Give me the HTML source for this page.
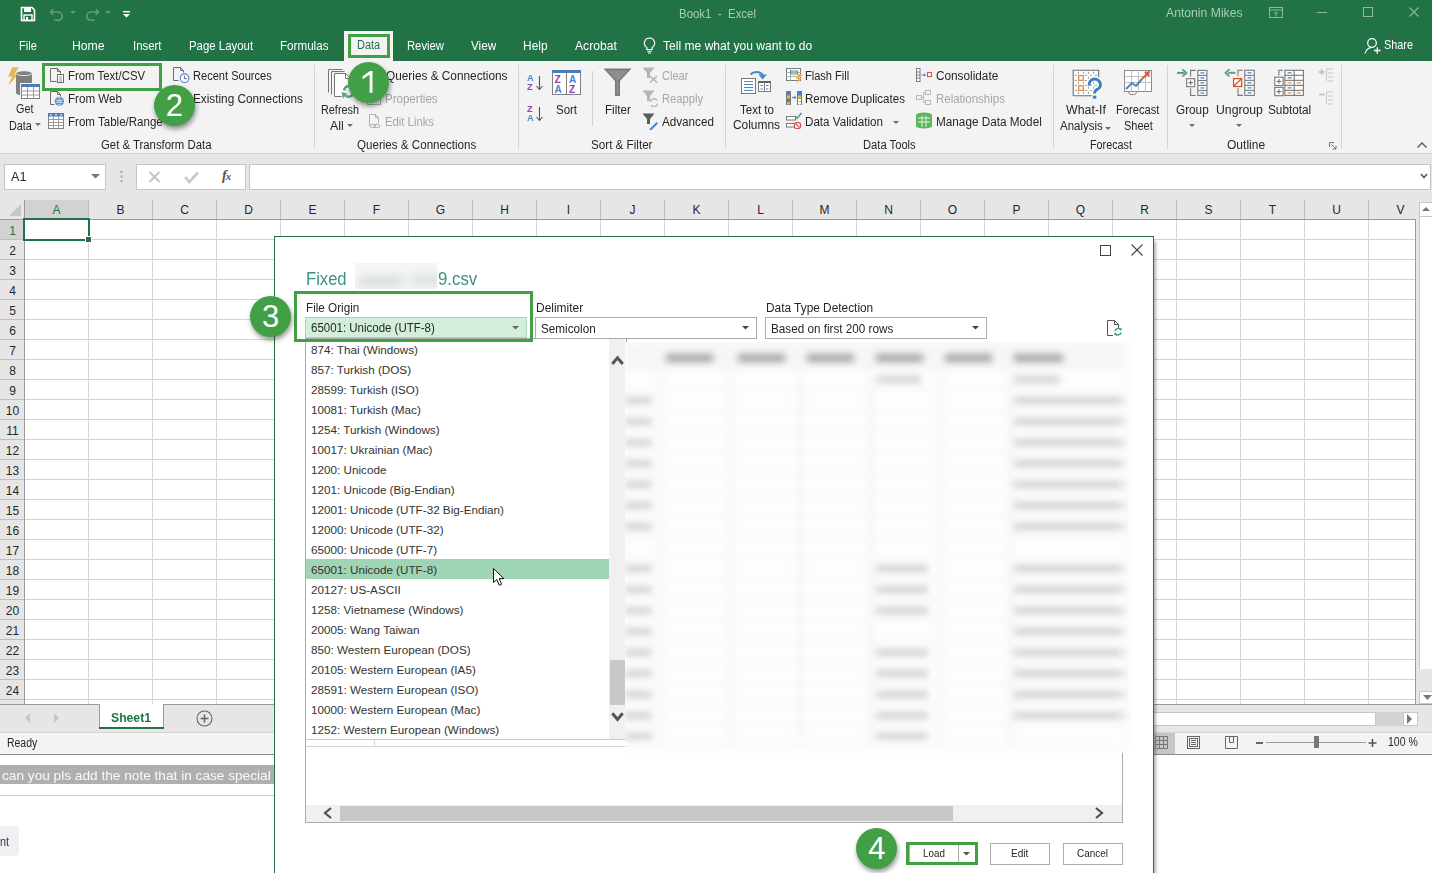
<!DOCTYPE html>
<html><head><meta charset="utf-8"><style>
html,body{margin:0;padding:0;}
body{width:1432px;height:873px;overflow:hidden;position:relative;font-family:"Liberation Sans", sans-serif;background:#fff;}
div,svg{box-sizing:border-box;}
</style></head><body>
<div style="position:absolute;left:0px;top:0px;width:1432px;height:61px;background:#217346;"></div>
<div style="position:absolute;left:344px;top:31px;width:49px;height:31px;background:#f3f3f3;"></div>
<div style="position:absolute;left:0px;top:61px;width:1432px;height:92px;background:#f3f3f3;"></div>
<div style="position:absolute;left:0px;top:153px;width:1432px;height:1px;background:#d2d2d2;"></div>
<div style="position:absolute;left:0px;top:154px;width:1432px;height:46px;background:#e6e6e6;"></div>
<div style="position:absolute;left:679.00px;top:8.24px;font-size:12px;line-height:12px;color:#a7cbb6;font-weight:normal;white-space:pre;transform:scaleX(0.9541);transform-origin:0 0;">Book1  -  Excel</div>
<div style="position:absolute;left:1166.00px;top:6.54px;font-size:12px;line-height:12px;color:#a7cbb6;font-weight:normal;white-space:pre;transform:scaleX(1.0163);transform-origin:0 0;">Antonin Mikes</div>
<div style="position:absolute;left:19.40px;top:40.14px;font-size:12px;line-height:12px;color:#ffffff;font-weight:normal;white-space:pre;transform:scaleX(0.9202);transform-origin:0 0;">File</div>
<div style="position:absolute;left:72.40px;top:40.14px;font-size:12px;line-height:12px;color:#ffffff;font-weight:normal;white-space:pre;transform:scaleX(1.0183);transform-origin:0 0;">Home</div>
<div style="position:absolute;left:132.50px;top:40.14px;font-size:12px;line-height:12px;color:#ffffff;font-weight:normal;white-space:pre;transform:scaleX(0.9462);transform-origin:0 0;">Insert</div>
<div style="position:absolute;left:188.50px;top:40.14px;font-size:12px;line-height:12px;color:#ffffff;font-weight:normal;white-space:pre;transform:scaleX(0.9512);transform-origin:0 0;">Page Layout</div>
<div style="position:absolute;left:280.30px;top:40.14px;font-size:12px;line-height:12px;color:#ffffff;font-weight:normal;white-space:pre;transform:scaleX(0.9697);transform-origin:0 0;">Formulas</div>
<div style="position:absolute;left:406.90px;top:40.14px;font-size:12px;line-height:12px;color:#ffffff;font-weight:normal;white-space:pre;transform:scaleX(0.9375);transform-origin:0 0;">Review</div>
<div style="position:absolute;left:470.80px;top:40.14px;font-size:12px;line-height:12px;color:#ffffff;font-weight:normal;white-space:pre;transform:scaleX(0.9769);transform-origin:0 0;">View</div>
<div style="position:absolute;left:523.00px;top:40.14px;font-size:12px;line-height:12px;color:#ffffff;font-weight:normal;white-space:pre;transform:scaleX(0.9965);transform-origin:0 0;">Help</div>
<div style="position:absolute;left:575.00px;top:40.14px;font-size:12px;line-height:12px;color:#ffffff;font-weight:normal;white-space:pre;transform:scaleX(1.0107);transform-origin:0 0;">Acrobat</div>
<div style="position:absolute;left:662.50px;top:40.14px;font-size:12px;line-height:12px;color:#ffffff;font-weight:normal;white-space:pre;transform:scaleX(1.0069);transform-origin:0 0;">Tell me what you want to do</div>
<div style="position:absolute;left:356.50px;top:39.44px;font-size:12px;line-height:12px;color:#217346;font-weight:normal;white-space:pre;transform:scaleX(0.9148);transform-origin:0 0;">Data</div>
<div style="position:absolute;left:1384.00px;top:39.44px;font-size:12px;line-height:12px;color:#ffffff;font-weight:normal;white-space:pre;transform:scaleX(0.9054);transform-origin:0 0;">Share</div>
<div style="position:absolute;left:15.60px;top:103.44px;font-size:12px;line-height:12px;color:#262626;font-weight:normal;white-space:pre;transform:scaleX(0.8995);transform-origin:0 0;">Get</div>
<div style="position:absolute;left:8.70px;top:119.64px;font-size:12px;line-height:12px;color:#262626;font-weight:normal;white-space:pre;transform:scaleX(0.9030);transform-origin:0 0;">Data</div>
<div style="position:absolute;left:67.60px;top:69.94px;font-size:12px;line-height:12px;color:#262626;font-weight:normal;white-space:pre;transform:scaleX(0.9502);transform-origin:0 0;">From Text/CSV</div>
<div style="position:absolute;left:67.60px;top:92.84px;font-size:12px;line-height:12px;color:#262626;font-weight:normal;white-space:pre;transform:scaleX(0.9678);transform-origin:0 0;">From Web</div>
<div style="position:absolute;left:67.60px;top:115.74px;font-size:12px;line-height:12px;color:#262626;font-weight:normal;white-space:pre;transform:scaleX(0.9624);transform-origin:0 0;">From Table/Range</div>
<div style="position:absolute;left:101.00px;top:139.44px;font-size:12px;line-height:12px;color:#262626;font-weight:normal;white-space:pre;transform:scaleX(0.9467);transform-origin:0 0;">Get &amp; Transform Data</div>
<div style="position:absolute;left:192.60px;top:69.84px;font-size:12px;line-height:12px;color:#262626;font-weight:normal;white-space:pre;transform:scaleX(0.9228);transform-origin:0 0;">Recent Sources</div>
<div style="position:absolute;left:192.60px;top:92.84px;font-size:12px;line-height:12px;color:#262626;font-weight:normal;white-space:pre;transform:scaleX(0.9807);transform-origin:0 0;">Existing Connections</div>
<div style="position:absolute;left:321.30px;top:103.54px;font-size:12px;line-height:12px;color:#262626;font-weight:normal;white-space:pre;transform:scaleX(0.9041);transform-origin:0 0;">Refresh</div>
<div style="position:absolute;left:330.00px;top:119.64px;font-size:12px;line-height:12px;color:#262626;font-weight:normal;white-space:pre;transform:scaleX(1.0342);transform-origin:0 0;">All</div>
<div style="position:absolute;left:386.40px;top:69.84px;font-size:12px;line-height:12px;color:#262626;font-weight:normal;white-space:pre;transform:scaleX(0.9846);transform-origin:0 0;">Queries &amp; Connections</div>
<div style="position:absolute;left:385.00px;top:92.94px;font-size:12px;line-height:12px;color:#a6a6a6;font-weight:normal;white-space:pre;transform:scaleX(0.9616);transform-origin:0 0;">Properties</div>
<div style="position:absolute;left:385.00px;top:115.74px;font-size:12px;line-height:12px;color:#a6a6a6;font-weight:normal;white-space:pre;transform:scaleX(0.9417);transform-origin:0 0;">Edit Links</div>
<div style="position:absolute;left:356.70px;top:139.14px;font-size:12px;line-height:12px;color:#262626;font-weight:normal;white-space:pre;transform:scaleX(0.9667);transform-origin:0 0;">Queries &amp; Connections</div>
<div style="position:absolute;left:556.00px;top:103.54px;font-size:12px;line-height:12px;color:#262626;font-weight:normal;white-space:pre;transform:scaleX(0.9539);transform-origin:0 0;">Sort</div>
<div style="position:absolute;left:605.30px;top:103.54px;font-size:12px;line-height:12px;color:#262626;font-weight:normal;white-space:pre;transform:scaleX(0.9711);transform-origin:0 0;">Filter</div>
<div style="position:absolute;left:661.70px;top:69.94px;font-size:12px;line-height:12px;color:#a6a6a6;font-weight:normal;white-space:pre;transform:scaleX(0.9168);transform-origin:0 0;">Clear</div>
<div style="position:absolute;left:661.70px;top:92.84px;font-size:12px;line-height:12px;color:#a6a6a6;font-weight:normal;white-space:pre;transform:scaleX(0.9334);transform-origin:0 0;">Reapply</div>
<div style="position:absolute;left:661.70px;top:115.54px;font-size:12px;line-height:12px;color:#262626;font-weight:normal;white-space:pre;transform:scaleX(0.9724);transform-origin:0 0;">Advanced</div>
<div style="position:absolute;left:591.40px;top:139.44px;font-size:12px;line-height:12px;color:#262626;font-weight:normal;white-space:pre;transform:scaleX(0.9707);transform-origin:0 0;">Sort &amp; Filter</div>
<div style="position:absolute;left:739.80px;top:103.54px;font-size:12px;line-height:12px;color:#262626;font-weight:normal;white-space:pre;transform:scaleX(0.9587);transform-origin:0 0;">Text to</div>
<div style="position:absolute;left:732.50px;top:119.24px;font-size:12px;line-height:12px;color:#262626;font-weight:normal;white-space:pre;transform:scaleX(0.9924);transform-origin:0 0;">Columns</div>
<div style="position:absolute;left:805.40px;top:69.64px;font-size:12px;line-height:12px;color:#262626;font-weight:normal;white-space:pre;transform:scaleX(0.9205);transform-origin:0 0;">Flash Fill</div>
<div style="position:absolute;left:805.40px;top:92.74px;font-size:12px;line-height:12px;color:#262626;font-weight:normal;white-space:pre;transform:scaleX(0.9601);transform-origin:0 0;">Remove Duplicates</div>
<div style="position:absolute;left:805.40px;top:115.64px;font-size:12px;line-height:12px;color:#262626;font-weight:normal;white-space:pre;transform:scaleX(0.9689);transform-origin:0 0;">Data Validation</div>
<div style="position:absolute;left:935.60px;top:69.64px;font-size:12px;line-height:12px;color:#262626;font-weight:normal;white-space:pre;transform:scaleX(0.9815);transform-origin:0 0;">Consolidate</div>
<div style="position:absolute;left:935.60px;top:92.74px;font-size:12px;line-height:12px;color:#a6a6a6;font-weight:normal;white-space:pre;transform:scaleX(0.9563);transform-origin:0 0;">Relationships</div>
<div style="position:absolute;left:935.60px;top:115.64px;font-size:12px;line-height:12px;color:#262626;font-weight:normal;white-space:pre;transform:scaleX(0.9789);transform-origin:0 0;">Manage Data Model</div>
<div style="position:absolute;left:862.70px;top:139.44px;font-size:12px;line-height:12px;color:#262626;font-weight:normal;white-space:pre;transform:scaleX(0.9330);transform-origin:0 0;">Data Tools</div>
<div style="position:absolute;left:1066.00px;top:103.94px;font-size:12px;line-height:12px;color:#262626;font-weight:normal;white-space:pre;transform:scaleX(1.0343);transform-origin:0 0;">What-If</div>
<div style="position:absolute;left:1060.00px;top:119.74px;font-size:12px;line-height:12px;color:#262626;font-weight:normal;white-space:pre;transform:scaleX(0.9578);transform-origin:0 0;">Analysis</div>
<div style="position:absolute;left:1116.00px;top:103.94px;font-size:12px;line-height:12px;color:#262626;font-weight:normal;white-space:pre;transform:scaleX(0.9296);transform-origin:0 0;">Forecast</div>
<div style="position:absolute;left:1124.00px;top:119.74px;font-size:12px;line-height:12px;color:#262626;font-weight:normal;white-space:pre;transform:scaleX(0.9152);transform-origin:0 0;">Sheet</div>
<div style="position:absolute;left:1089.50px;top:139.44px;font-size:12px;line-height:12px;color:#262626;font-weight:normal;white-space:pre;transform:scaleX(0.8975);transform-origin:0 0;">Forecast</div>
<div style="position:absolute;left:1176.00px;top:103.94px;font-size:12px;line-height:12px;color:#262626;font-weight:normal;white-space:pre;transform:scaleX(0.9802);transform-origin:0 0;">Group</div>
<div style="position:absolute;left:1216.00px;top:103.94px;font-size:12px;line-height:12px;color:#262626;font-weight:normal;white-space:pre;transform:scaleX(1.0189);transform-origin:0 0;">Ungroup</div>
<div style="position:absolute;left:1268.20px;top:103.94px;font-size:12px;line-height:12px;color:#262626;font-weight:normal;white-space:pre;transform:scaleX(0.9808);transform-origin:0 0;">Subtotal</div>
<div style="position:absolute;left:1227.40px;top:139.44px;font-size:12px;line-height:12px;color:#262626;font-weight:normal;white-space:pre;transform:scaleX(1.0018);transform-origin:0 0;">Outline</div>
<div style="position:absolute;left:314px;top:65px;width:1px;height:84px;background:#d4d4d4;"></div>
<div style="position:absolute;left:518px;top:65px;width:1px;height:84px;background:#d4d4d4;"></div>
<div style="position:absolute;left:725px;top:65px;width:1px;height:84px;background:#d4d4d4;"></div>
<div style="position:absolute;left:1053px;top:65px;width:1px;height:84px;background:#d4d4d4;"></div>
<div style="position:absolute;left:1167px;top:65px;width:1px;height:84px;background:#d4d4d4;"></div>
<div style="position:absolute;left:1341px;top:65px;width:1px;height:84px;background:#d4d4d4;"></div>
<div style="position:absolute;left:592px;top:71px;width:1px;height:55px;background:#d4d4d4;"></div>
<div style="position:absolute;left:4px;top:164px;width:102px;height:26px;background:#ffffff;border:1px solid #c6c6c6;"></div>
<div style="position:absolute;left:11.20px;top:171.44px;font-size:12px;line-height:12px;color:#262626;font-weight:normal;white-space:pre;transform:scaleX(1.0553);transform-origin:0 0;">A1</div>
<div style="position:absolute;left:136px;top:164px;width:110px;height:26px;background:#ffffff;border:1px solid #c6c6c6;"></div>
<div style="position:absolute;left:249px;top:164px;width:1182px;height:26px;background:#ffffff;border:1px solid #c6c6c6;"></div>
<div style="position:absolute;left:0px;top:200px;width:1416px;height:20px;background:#e6e6e6;"></div>
<div style="position:absolute;left:24px;top:200px;width:65px;height:19px;background:#d2d2d2;"></div>
<div style="position:absolute;left:0px;top:219px;width:1416px;height:1px;background:#9b9b9b;"></div>
<div style="position:absolute;left:0px;top:220px;width:24px;height:484px;background:#e6e6e6;"></div>
<div style="position:absolute;left:0px;top:220px;width:24px;height:19px;background:#d2d2d2;"></div>
<div style="position:absolute;left:24px;top:200px;width:1px;height:504px;background:#9b9b9b;"></div>
<div style="position:absolute;left:88px;top:200px;width:1px;height:19px;background:#bfbfbf;"></div>
<div style="position:absolute;left:88px;top:220px;width:1px;height:484px;background:#d4d4d4;"></div>
<div style="position:absolute;left:152px;top:200px;width:1px;height:19px;background:#bfbfbf;"></div>
<div style="position:absolute;left:152px;top:220px;width:1px;height:484px;background:#d4d4d4;"></div>
<div style="position:absolute;left:216px;top:200px;width:1px;height:19px;background:#bfbfbf;"></div>
<div style="position:absolute;left:216px;top:220px;width:1px;height:484px;background:#d4d4d4;"></div>
<div style="position:absolute;left:280px;top:200px;width:1px;height:19px;background:#bfbfbf;"></div>
<div style="position:absolute;left:280px;top:220px;width:1px;height:484px;background:#d4d4d4;"></div>
<div style="position:absolute;left:344px;top:200px;width:1px;height:19px;background:#bfbfbf;"></div>
<div style="position:absolute;left:344px;top:220px;width:1px;height:484px;background:#d4d4d4;"></div>
<div style="position:absolute;left:408px;top:200px;width:1px;height:19px;background:#bfbfbf;"></div>
<div style="position:absolute;left:408px;top:220px;width:1px;height:484px;background:#d4d4d4;"></div>
<div style="position:absolute;left:472px;top:200px;width:1px;height:19px;background:#bfbfbf;"></div>
<div style="position:absolute;left:472px;top:220px;width:1px;height:484px;background:#d4d4d4;"></div>
<div style="position:absolute;left:536px;top:200px;width:1px;height:19px;background:#bfbfbf;"></div>
<div style="position:absolute;left:536px;top:220px;width:1px;height:484px;background:#d4d4d4;"></div>
<div style="position:absolute;left:600px;top:200px;width:1px;height:19px;background:#bfbfbf;"></div>
<div style="position:absolute;left:600px;top:220px;width:1px;height:484px;background:#d4d4d4;"></div>
<div style="position:absolute;left:664px;top:200px;width:1px;height:19px;background:#bfbfbf;"></div>
<div style="position:absolute;left:664px;top:220px;width:1px;height:484px;background:#d4d4d4;"></div>
<div style="position:absolute;left:728px;top:200px;width:1px;height:19px;background:#bfbfbf;"></div>
<div style="position:absolute;left:728px;top:220px;width:1px;height:484px;background:#d4d4d4;"></div>
<div style="position:absolute;left:792px;top:200px;width:1px;height:19px;background:#bfbfbf;"></div>
<div style="position:absolute;left:792px;top:220px;width:1px;height:484px;background:#d4d4d4;"></div>
<div style="position:absolute;left:856px;top:200px;width:1px;height:19px;background:#bfbfbf;"></div>
<div style="position:absolute;left:856px;top:220px;width:1px;height:484px;background:#d4d4d4;"></div>
<div style="position:absolute;left:920px;top:200px;width:1px;height:19px;background:#bfbfbf;"></div>
<div style="position:absolute;left:920px;top:220px;width:1px;height:484px;background:#d4d4d4;"></div>
<div style="position:absolute;left:984px;top:200px;width:1px;height:19px;background:#bfbfbf;"></div>
<div style="position:absolute;left:984px;top:220px;width:1px;height:484px;background:#d4d4d4;"></div>
<div style="position:absolute;left:1048px;top:200px;width:1px;height:19px;background:#bfbfbf;"></div>
<div style="position:absolute;left:1048px;top:220px;width:1px;height:484px;background:#d4d4d4;"></div>
<div style="position:absolute;left:1112px;top:200px;width:1px;height:19px;background:#bfbfbf;"></div>
<div style="position:absolute;left:1112px;top:220px;width:1px;height:484px;background:#d4d4d4;"></div>
<div style="position:absolute;left:1176px;top:200px;width:1px;height:19px;background:#bfbfbf;"></div>
<div style="position:absolute;left:1176px;top:220px;width:1px;height:484px;background:#d4d4d4;"></div>
<div style="position:absolute;left:1240px;top:200px;width:1px;height:19px;background:#bfbfbf;"></div>
<div style="position:absolute;left:1240px;top:220px;width:1px;height:484px;background:#d4d4d4;"></div>
<div style="position:absolute;left:1304px;top:200px;width:1px;height:19px;background:#bfbfbf;"></div>
<div style="position:absolute;left:1304px;top:220px;width:1px;height:484px;background:#d4d4d4;"></div>
<div style="position:absolute;left:1368px;top:200px;width:1px;height:19px;background:#bfbfbf;"></div>
<div style="position:absolute;left:1368px;top:220px;width:1px;height:484px;background:#d4d4d4;"></div>
<div style="position:absolute;left:0px;top:239px;width:24px;height:1px;background:#bfbfbf;"></div>
<div style="position:absolute;left:25px;top:239px;width:1391px;height:1px;background:#d4d4d4;"></div>
<div style="position:absolute;left:0px;top:259px;width:24px;height:1px;background:#bfbfbf;"></div>
<div style="position:absolute;left:25px;top:259px;width:1391px;height:1px;background:#d4d4d4;"></div>
<div style="position:absolute;left:0px;top:279px;width:24px;height:1px;background:#bfbfbf;"></div>
<div style="position:absolute;left:25px;top:279px;width:1391px;height:1px;background:#d4d4d4;"></div>
<div style="position:absolute;left:0px;top:299px;width:24px;height:1px;background:#bfbfbf;"></div>
<div style="position:absolute;left:25px;top:299px;width:1391px;height:1px;background:#d4d4d4;"></div>
<div style="position:absolute;left:0px;top:319px;width:24px;height:1px;background:#bfbfbf;"></div>
<div style="position:absolute;left:25px;top:319px;width:1391px;height:1px;background:#d4d4d4;"></div>
<div style="position:absolute;left:0px;top:339px;width:24px;height:1px;background:#bfbfbf;"></div>
<div style="position:absolute;left:25px;top:339px;width:1391px;height:1px;background:#d4d4d4;"></div>
<div style="position:absolute;left:0px;top:359px;width:24px;height:1px;background:#bfbfbf;"></div>
<div style="position:absolute;left:25px;top:359px;width:1391px;height:1px;background:#d4d4d4;"></div>
<div style="position:absolute;left:0px;top:379px;width:24px;height:1px;background:#bfbfbf;"></div>
<div style="position:absolute;left:25px;top:379px;width:1391px;height:1px;background:#d4d4d4;"></div>
<div style="position:absolute;left:0px;top:399px;width:24px;height:1px;background:#bfbfbf;"></div>
<div style="position:absolute;left:25px;top:399px;width:1391px;height:1px;background:#d4d4d4;"></div>
<div style="position:absolute;left:0px;top:419px;width:24px;height:1px;background:#bfbfbf;"></div>
<div style="position:absolute;left:25px;top:419px;width:1391px;height:1px;background:#d4d4d4;"></div>
<div style="position:absolute;left:0px;top:439px;width:24px;height:1px;background:#bfbfbf;"></div>
<div style="position:absolute;left:25px;top:439px;width:1391px;height:1px;background:#d4d4d4;"></div>
<div style="position:absolute;left:0px;top:459px;width:24px;height:1px;background:#bfbfbf;"></div>
<div style="position:absolute;left:25px;top:459px;width:1391px;height:1px;background:#d4d4d4;"></div>
<div style="position:absolute;left:0px;top:479px;width:24px;height:1px;background:#bfbfbf;"></div>
<div style="position:absolute;left:25px;top:479px;width:1391px;height:1px;background:#d4d4d4;"></div>
<div style="position:absolute;left:0px;top:499px;width:24px;height:1px;background:#bfbfbf;"></div>
<div style="position:absolute;left:25px;top:499px;width:1391px;height:1px;background:#d4d4d4;"></div>
<div style="position:absolute;left:0px;top:519px;width:24px;height:1px;background:#bfbfbf;"></div>
<div style="position:absolute;left:25px;top:519px;width:1391px;height:1px;background:#d4d4d4;"></div>
<div style="position:absolute;left:0px;top:539px;width:24px;height:1px;background:#bfbfbf;"></div>
<div style="position:absolute;left:25px;top:539px;width:1391px;height:1px;background:#d4d4d4;"></div>
<div style="position:absolute;left:0px;top:559px;width:24px;height:1px;background:#bfbfbf;"></div>
<div style="position:absolute;left:25px;top:559px;width:1391px;height:1px;background:#d4d4d4;"></div>
<div style="position:absolute;left:0px;top:579px;width:24px;height:1px;background:#bfbfbf;"></div>
<div style="position:absolute;left:25px;top:579px;width:1391px;height:1px;background:#d4d4d4;"></div>
<div style="position:absolute;left:0px;top:599px;width:24px;height:1px;background:#bfbfbf;"></div>
<div style="position:absolute;left:25px;top:599px;width:1391px;height:1px;background:#d4d4d4;"></div>
<div style="position:absolute;left:0px;top:619px;width:24px;height:1px;background:#bfbfbf;"></div>
<div style="position:absolute;left:25px;top:619px;width:1391px;height:1px;background:#d4d4d4;"></div>
<div style="position:absolute;left:0px;top:639px;width:24px;height:1px;background:#bfbfbf;"></div>
<div style="position:absolute;left:25px;top:639px;width:1391px;height:1px;background:#d4d4d4;"></div>
<div style="position:absolute;left:0px;top:659px;width:24px;height:1px;background:#bfbfbf;"></div>
<div style="position:absolute;left:25px;top:659px;width:1391px;height:1px;background:#d4d4d4;"></div>
<div style="position:absolute;left:0px;top:679px;width:24px;height:1px;background:#bfbfbf;"></div>
<div style="position:absolute;left:25px;top:679px;width:1391px;height:1px;background:#d4d4d4;"></div>
<div style="position:absolute;left:0px;top:699px;width:24px;height:1px;background:#bfbfbf;"></div>
<div style="position:absolute;left:25px;top:699px;width:1391px;height:1px;background:#d4d4d4;"></div>
<div style="position:absolute;left:1415px;top:219px;width:1px;height:485px;background:#9b9b9b;"></div>
<div style="position:absolute;left:0px;top:704px;width:1416px;height:1px;background:#9b9b9b;"></div>
<div style="position:absolute;left:52.49px;top:204.34px;font-size:12px;line-height:12px;color:#217346;font-weight:normal;white-space:pre;">A</div>
<div style="position:absolute;left:116.49px;top:204.34px;font-size:12px;line-height:12px;color:#262626;font-weight:normal;white-space:pre;">B</div>
<div style="position:absolute;left:180.16px;top:204.34px;font-size:12px;line-height:12px;color:#262626;font-weight:normal;white-space:pre;">C</div>
<div style="position:absolute;left:244.16px;top:204.34px;font-size:12px;line-height:12px;color:#262626;font-weight:normal;white-space:pre;">D</div>
<div style="position:absolute;left:308.49px;top:204.34px;font-size:12px;line-height:12px;color:#262626;font-weight:normal;white-space:pre;">E</div>
<div style="position:absolute;left:372.83px;top:204.34px;font-size:12px;line-height:12px;color:#262626;font-weight:normal;white-space:pre;">F</div>
<div style="position:absolute;left:435.83px;top:204.34px;font-size:12px;line-height:12px;color:#262626;font-weight:normal;white-space:pre;">G</div>
<div style="position:absolute;left:500.16px;top:204.34px;font-size:12px;line-height:12px;color:#262626;font-weight:normal;white-space:pre;">H</div>
<div style="position:absolute;left:566.83px;top:204.34px;font-size:12px;line-height:12px;color:#262626;font-weight:normal;white-space:pre;">I</div>
<div style="position:absolute;left:629.50px;top:204.34px;font-size:12px;line-height:12px;color:#262626;font-weight:normal;white-space:pre;">J</div>
<div style="position:absolute;left:692.49px;top:204.34px;font-size:12px;line-height:12px;color:#262626;font-weight:normal;white-space:pre;">K</div>
<div style="position:absolute;left:757.16px;top:204.34px;font-size:12px;line-height:12px;color:#262626;font-weight:normal;white-space:pre;">L</div>
<div style="position:absolute;left:819.50px;top:204.34px;font-size:12px;line-height:12px;color:#262626;font-weight:normal;white-space:pre;">M</div>
<div style="position:absolute;left:884.16px;top:204.34px;font-size:12px;line-height:12px;color:#262626;font-weight:normal;white-space:pre;">N</div>
<div style="position:absolute;left:947.83px;top:204.34px;font-size:12px;line-height:12px;color:#262626;font-weight:normal;white-space:pre;">O</div>
<div style="position:absolute;left:1012.49px;top:204.34px;font-size:12px;line-height:12px;color:#262626;font-weight:normal;white-space:pre;">P</div>
<div style="position:absolute;left:1075.83px;top:204.34px;font-size:12px;line-height:12px;color:#262626;font-weight:normal;white-space:pre;">Q</div>
<div style="position:absolute;left:1140.16px;top:204.34px;font-size:12px;line-height:12px;color:#262626;font-weight:normal;white-space:pre;">R</div>
<div style="position:absolute;left:1204.49px;top:204.34px;font-size:12px;line-height:12px;color:#262626;font-weight:normal;white-space:pre;">S</div>
<div style="position:absolute;left:1268.83px;top:204.34px;font-size:12px;line-height:12px;color:#262626;font-weight:normal;white-space:pre;">T</div>
<div style="position:absolute;left:1332.16px;top:204.34px;font-size:12px;line-height:12px;color:#262626;font-weight:normal;white-space:pre;">U</div>
<div style="position:absolute;left:1396.49px;top:204.34px;font-size:12px;line-height:12px;color:#262626;font-weight:normal;white-space:pre;">V</div>
<div style="position:absolute;left:9.16px;top:225.14px;font-size:12px;line-height:12px;color:#217346;font-weight:normal;white-space:pre;">1</div>
<div style="position:absolute;left:9.16px;top:245.14px;font-size:12px;line-height:12px;color:#262626;font-weight:normal;white-space:pre;">2</div>
<div style="position:absolute;left:9.16px;top:265.14px;font-size:12px;line-height:12px;color:#262626;font-weight:normal;white-space:pre;">3</div>
<div style="position:absolute;left:9.16px;top:285.14px;font-size:12px;line-height:12px;color:#262626;font-weight:normal;white-space:pre;">4</div>
<div style="position:absolute;left:9.16px;top:305.14px;font-size:12px;line-height:12px;color:#262626;font-weight:normal;white-space:pre;">5</div>
<div style="position:absolute;left:9.16px;top:325.14px;font-size:12px;line-height:12px;color:#262626;font-weight:normal;white-space:pre;">6</div>
<div style="position:absolute;left:9.16px;top:345.14px;font-size:12px;line-height:12px;color:#262626;font-weight:normal;white-space:pre;">7</div>
<div style="position:absolute;left:9.16px;top:365.14px;font-size:12px;line-height:12px;color:#262626;font-weight:normal;white-space:pre;">8</div>
<div style="position:absolute;left:9.16px;top:385.14px;font-size:12px;line-height:12px;color:#262626;font-weight:normal;white-space:pre;">9</div>
<div style="position:absolute;left:5.82px;top:405.14px;font-size:12px;line-height:12px;color:#262626;font-weight:normal;white-space:pre;">10</div>
<div style="position:absolute;left:6.27px;top:425.14px;font-size:12px;line-height:12px;color:#262626;font-weight:normal;white-space:pre;">11</div>
<div style="position:absolute;left:5.82px;top:445.14px;font-size:12px;line-height:12px;color:#262626;font-weight:normal;white-space:pre;">12</div>
<div style="position:absolute;left:5.82px;top:465.14px;font-size:12px;line-height:12px;color:#262626;font-weight:normal;white-space:pre;">13</div>
<div style="position:absolute;left:5.82px;top:485.14px;font-size:12px;line-height:12px;color:#262626;font-weight:normal;white-space:pre;">14</div>
<div style="position:absolute;left:5.82px;top:505.14px;font-size:12px;line-height:12px;color:#262626;font-weight:normal;white-space:pre;">15</div>
<div style="position:absolute;left:5.82px;top:525.14px;font-size:12px;line-height:12px;color:#262626;font-weight:normal;white-space:pre;">16</div>
<div style="position:absolute;left:5.82px;top:545.14px;font-size:12px;line-height:12px;color:#262626;font-weight:normal;white-space:pre;">17</div>
<div style="position:absolute;left:5.82px;top:565.14px;font-size:12px;line-height:12px;color:#262626;font-weight:normal;white-space:pre;">18</div>
<div style="position:absolute;left:5.82px;top:585.14px;font-size:12px;line-height:12px;color:#262626;font-weight:normal;white-space:pre;">19</div>
<div style="position:absolute;left:5.82px;top:605.14px;font-size:12px;line-height:12px;color:#262626;font-weight:normal;white-space:pre;">20</div>
<div style="position:absolute;left:5.82px;top:625.14px;font-size:12px;line-height:12px;color:#262626;font-weight:normal;white-space:pre;">21</div>
<div style="position:absolute;left:5.82px;top:645.14px;font-size:12px;line-height:12px;color:#262626;font-weight:normal;white-space:pre;">22</div>
<div style="position:absolute;left:5.82px;top:665.14px;font-size:12px;line-height:12px;color:#262626;font-weight:normal;white-space:pre;">23</div>
<div style="position:absolute;left:5.82px;top:685.14px;font-size:12px;line-height:12px;color:#262626;font-weight:normal;white-space:pre;">24</div>
<svg style="position:absolute;left:9px;top:204px;" width="13" height="12" viewBox="0 0 13 12"><polygon points="12,0 12,12 0,12" fill="#c6c6c6"/></svg>
<div style="position:absolute;left:23px;top:218px;width:67px;height:23px;background:transparent;border:2px solid #217346;"></div>
<div style="position:absolute;left:86px;top:237px;width:5px;height:5px;background:#217346;outline:1px solid #fff;"></div>
<div style="position:absolute;left:1416px;top:200px;width:16px;height:504px;background:#e6e6e6;"></div>
<div style="position:absolute;left:1419px;top:202px;width:13px;height:15px;background:#ffffff;border:1px solid #c6c6c6;border-right:none;"></div>
<div style="position:absolute;left:1419px;top:217px;width:13px;height:452px;background:#ffffff;border-left:1px solid #c6c6c6;"></div>
<div style="position:absolute;left:1419px;top:691px;width:13px;height:13px;background:#ffffff;border:1px solid #c6c6c6;border-right:none;"></div>
<div style="position:absolute;left:0px;top:704px;width:1432px;height:28px;background:#e6e6e6;"></div>
<div style="position:absolute;left:0px;top:704px;width:1432px;height:1px;background:#9b9b9b;"></div>
<div style="position:absolute;left:99px;top:704px;width:65px;height:25px;background:#ffffff;border:1px solid #9b9b9b;border-top:none;"></div>
<div style="position:absolute;left:99px;top:727px;width:65px;height:2px;background:#217346;"></div>
<div style="position:absolute;left:111.00px;top:712.14px;font-size:12px;line-height:12px;color:#217346;font-weight:bold;white-space:pre;transform:scaleX(1.0163);transform-origin:0 0;">Sheet1</div>
<div style="position:absolute;left:1150px;top:712px;width:226px;height:14px;background:#ffffff;border:1px solid #c6c6c6;"></div>
<div style="position:absolute;left:1376px;top:712px;width:27px;height:14px;background:#d4d4d4;"></div>
<div style="position:absolute;left:1403px;top:712px;width:15px;height:14px;background:#ffffff;border:1px solid #c6c6c6;"></div>
<div style="position:absolute;left:0px;top:732px;width:1432px;height:22px;background:#f3f3f3;"></div>
<div style="position:absolute;left:0px;top:732px;width:1432px;height:1px;background:#d4d4d4;"></div>
<div style="position:absolute;left:0px;top:754px;width:1432px;height:1px;background:#8c8c8c;"></div>
<div style="position:absolute;left:6.50px;top:737.24px;font-size:12px;line-height:12px;color:#262626;font-weight:normal;white-space:pre;transform:scaleX(0.8706);transform-origin:0 0;">Ready</div>
<div style="position:absolute;left:1150px;top:733px;width:25px;height:21px;background:#c6c6c6;"></div>
<div style="position:absolute;left:1388.00px;top:735.84px;font-size:12px;line-height:12px;color:#262626;font-weight:normal;white-space:pre;transform:scaleX(0.8757);transform-origin:0 0;">100 %</div>
<div style="position:absolute;left:0px;top:755px;width:1432px;height:118px;background:#ffffff;"></div>
<div style="position:absolute;left:0px;top:765px;width:274px;height:19px;background:#afafaf;"></div>
<div style="position:absolute;left:2.30px;top:769.10px;font-size:13px;line-height:13px;color:#fafafa;font-weight:normal;white-space:pre;transform:scaleX(1.0503);transform-origin:0 0;">can you pls add the note that in case special</div>
<div style="position:absolute;left:0px;top:795px;width:274px;height:1px;background:#c8ced6;"></div>
<div style="position:absolute;left:-10px;top:826px;width:29px;height:30px;background:#eef0f3;border-radius:4px;"></div>
<div style="position:absolute;left:-0.50px;top:835.30px;font-size:13px;line-height:13px;color:#333;font-weight:normal;white-space:pre;transform:scaleX(0.8300);transform-origin:0 0;">nt</div>
<div style="position:absolute;left:274px;top:236px;width:880px;height:660px;background:#ffffff;border:1px solid #217346;box-shadow:3px 4px 3px -1px rgba(0,0,0,0.3);"></div>
<div style="position:absolute;left:306.00px;top:268.52px;font-size:19px;line-height:19px;color:#3f9084;font-weight:normal;white-space:pre;transform:scaleX(0.8737);transform-origin:0 0;">Fixed</div>
<div style="position:absolute;left:355px;top:263px;width:82px;height:26px;background:#f4f6f5;overflow:hidden;"><div style="position:absolute;left:4px;top:13px;width:44px;height:10px;background:#d9dfdb;filter:blur(4px);"></div><div style="position:absolute;left:56px;top:12px;width:30px;height:10px;background:#dbe1dd;filter:blur(4px);"></div></div>
<div style="position:absolute;left:437.50px;top:268.52px;font-size:19px;line-height:19px;color:#3f9084;font-weight:normal;white-space:pre;transform:scaleX(0.8837);transform-origin:0 0;">9.csv</div>
<div style="position:absolute;left:1100px;top:245px;width:11px;height:11px;background:transparent;border:1px solid #444;"></div>
<svg style="position:absolute;left:1131px;top:244px;" width="12" height="12" viewBox="0 0 12 12"><path d="M0.5 0.5 L11.5 11.5 M11.5 0.5 L0.5 11.5" stroke="#444" stroke-width="1.1"/></svg>
<div style="position:absolute;left:305.50px;top:301.74px;font-size:12px;line-height:12px;color:#262626;font-weight:normal;white-space:pre;transform:scaleX(0.9746);transform-origin:0 0;">File Origin</div>
<div style="position:absolute;left:535.60px;top:301.74px;font-size:12px;line-height:12px;color:#262626;font-weight:normal;white-space:pre;transform:scaleX(0.9970);transform-origin:0 0;">Delimiter</div>
<div style="position:absolute;left:765.50px;top:302.14px;font-size:12px;line-height:12px;color:#262626;font-weight:normal;white-space:pre;transform:scaleX(0.9879);transform-origin:0 0;">Data Type Detection</div>
<div style="position:absolute;left:305px;top:317px;width:222px;height:21px;background:#d3eedb;border:1px solid #a6d8b4;"></div>
<div style="position:absolute;left:311.00px;top:322.44px;font-size:12px;line-height:12px;color:#262626;font-weight:normal;white-space:pre;transform:scaleX(0.9568);transform-origin:0 0;">65001: Unicode (UTF-8)</div>
<svg style="position:absolute;left:512px;top:326px;" width="7" height="4" viewBox="0 0 7 4"><polygon points="0,0 7,0 3.5,3.5" fill="#666"/></svg>
<div style="position:absolute;left:535px;top:317px;width:222px;height:22px;background:#ffffff;border:1px solid #ababab;"></div>
<div style="position:absolute;left:541.00px;top:322.64px;font-size:12px;line-height:12px;color:#262626;font-weight:normal;white-space:pre;transform:scaleX(0.9762);transform-origin:0 0;">Semicolon</div>
<svg style="position:absolute;left:742px;top:326px;" width="7" height="4" viewBox="0 0 7 4"><polygon points="0,0 7,0 3.5,3.5" fill="#444"/></svg>
<div style="position:absolute;left:765px;top:317px;width:222px;height:22px;background:#ffffff;border:1px solid #ababab;"></div>
<div style="position:absolute;left:771.30px;top:322.74px;font-size:12px;line-height:12px;color:#262626;font-weight:normal;white-space:pre;transform:scaleX(0.9752);transform-origin:0 0;">Based on first 200 rows</div>
<svg style="position:absolute;left:972px;top:326px;" width="7" height="4" viewBox="0 0 7 4"><polygon points="0,0 7,0 3.5,3.5" fill="#444"/></svg>
<svg style="position:absolute;left:1106px;top:319px;" width="17" height="18" viewBox="0 0 17 18"><path d="M1.5 1.5 H8.5 L12.5 5.5 V9 M8.5 1.5 V5.5 H12.5 M1.5 1.5 V16.5 H7" fill="none" stroke="#555" stroke-width="1"/><path d="M9 12 A3.2 3.2 0 0 1 14.5 10.5 M15 13.5 A3.2 3.2 0 0 1 9.5 15" fill="none" stroke="#3a9a6a" stroke-width="1.3"/><polygon points="13,9 16,9.5 15,12" fill="#3a9a6a"/><polygon points="11,16.5 8,16 9,13" fill="#3a9a6a"/></svg>
<div style="position:absolute;left:305px;top:346px;width:818px;height:477px;background:#ffffff;border:1px solid #ababab;border-top:none;"></div>
<div style="position:absolute;left:306px;top:739px;width:816px;height:1px;background:#c8c8c8;"></div>
<div style="position:absolute;left:306px;top:746px;width:816px;height:1px;background:#d4d4d4;"></div>
<div style="position:absolute;left:374px;top:739px;width:1px;height:8px;background:#d4d4d4;"></div>
<div style="position:absolute;left:306px;top:805px;width:816px;height:17px;background:#f0f0f0;"></div>
<div style="position:absolute;left:340px;top:806px;width:613px;height:15px;background:#c8c8c8;"></div>
<svg style="position:absolute;left:322px;top:807px;" width="11" height="12" viewBox="0 0 11 12"><path d="M9 1 L3 6 L9 11" fill="none" stroke="#505050" stroke-width="2.2"/></svg>
<svg style="position:absolute;left:1094px;top:807px;" width="11" height="12" viewBox="0 0 11 12"><path d="M2 1 L8 6 L2 11" fill="none" stroke="#505050" stroke-width="2.2"/></svg>
<div style="position:absolute;left:909px;top:843px;width:67px;height:22px;background:#ffffff;border:1px solid #adadad;"></div>
<div style="position:absolute;left:958px;top:843px;width:1px;height:22px;background:#adadad;"></div>
<div style="position:absolute;left:923.10px;top:848.49px;font-size:11px;line-height:11px;color:#262626;font-weight:normal;white-space:pre;transform:scaleX(0.8944);transform-origin:0 0;">Load</div>
<svg style="position:absolute;left:963px;top:852px;" width="7" height="4" viewBox="0 0 7 4"><polygon points="0,0 7,0 3.5,3.5" fill="#555"/></svg>
<div style="position:absolute;left:990px;top:843px;width:60px;height:22px;background:#ffffff;border:1px solid #adadad;"></div>
<div style="position:absolute;left:1011.00px;top:848.49px;font-size:11px;line-height:11px;color:#262626;font-weight:normal;white-space:pre;transform:scaleX(0.9173);transform-origin:0 0;">Edit</div>
<div style="position:absolute;left:1063px;top:843px;width:60px;height:22px;background:#ffffff;border:1px solid #adadad;"></div>
<div style="position:absolute;left:1077.30px;top:848.49px;font-size:11px;line-height:11px;color:#262626;font-weight:normal;white-space:pre;transform:scaleX(0.9022);transform-origin:0 0;">Cancel</div>
<div style="position:absolute;left:625px;top:342px;width:508px;height:411px;overflow:hidden;">
<div style="position:absolute;left:0;top:0;width:508px;height:411px;background:#f6f6f6;filter:blur(4px);"></div>
<div style="position:absolute;left:0;top:0;width:508px;height:411px;filter:blur(3.6px);">
<div style="position:absolute;left:0px;top:28px;width:33px;height:18px;background:#fdfdfd;"></div>
<div style="position:absolute;left:38px;top:28px;width:65px;height:18px;background:#fdfdfd;"></div>
<div style="position:absolute;left:108px;top:28px;width:65px;height:18px;background:#fdfdfd;"></div>
<div style="position:absolute;left:178px;top:28px;width:65px;height:18px;background:#fdfdfd;"></div>
<div style="position:absolute;left:248px;top:28px;width:65px;height:18px;background:#fdfdfd;"></div>
<div style="position:absolute;left:318px;top:28px;width:65px;height:18px;background:#fdfdfd;"></div>
<div style="position:absolute;left:388px;top:28px;width:112px;height:18px;background:#fdfdfd;"></div>
<div style="position:absolute;left:0px;top:49px;width:33px;height:18px;background:#fdfdfd;"></div>
<div style="position:absolute;left:38px;top:49px;width:65px;height:18px;background:#fdfdfd;"></div>
<div style="position:absolute;left:108px;top:49px;width:65px;height:18px;background:#fdfdfd;"></div>
<div style="position:absolute;left:178px;top:49px;width:65px;height:18px;background:#fdfdfd;"></div>
<div style="position:absolute;left:248px;top:49px;width:65px;height:18px;background:#fdfdfd;"></div>
<div style="position:absolute;left:318px;top:49px;width:65px;height:18px;background:#fdfdfd;"></div>
<div style="position:absolute;left:388px;top:49px;width:112px;height:18px;background:#fdfdfd;"></div>
<div style="position:absolute;left:0px;top:70px;width:33px;height:18px;background:#fdfdfd;"></div>
<div style="position:absolute;left:38px;top:70px;width:65px;height:18px;background:#fdfdfd;"></div>
<div style="position:absolute;left:108px;top:70px;width:65px;height:18px;background:#fdfdfd;"></div>
<div style="position:absolute;left:178px;top:70px;width:65px;height:18px;background:#fdfdfd;"></div>
<div style="position:absolute;left:248px;top:70px;width:65px;height:18px;background:#fdfdfd;"></div>
<div style="position:absolute;left:318px;top:70px;width:65px;height:18px;background:#fdfdfd;"></div>
<div style="position:absolute;left:388px;top:70px;width:112px;height:18px;background:#fdfdfd;"></div>
<div style="position:absolute;left:0px;top:91px;width:33px;height:18px;background:#fdfdfd;"></div>
<div style="position:absolute;left:38px;top:91px;width:65px;height:18px;background:#fdfdfd;"></div>
<div style="position:absolute;left:108px;top:91px;width:65px;height:18px;background:#fdfdfd;"></div>
<div style="position:absolute;left:178px;top:91px;width:65px;height:18px;background:#fdfdfd;"></div>
<div style="position:absolute;left:248px;top:91px;width:65px;height:18px;background:#fdfdfd;"></div>
<div style="position:absolute;left:318px;top:91px;width:65px;height:18px;background:#fdfdfd;"></div>
<div style="position:absolute;left:388px;top:91px;width:112px;height:18px;background:#fdfdfd;"></div>
<div style="position:absolute;left:0px;top:112px;width:33px;height:18px;background:#fdfdfd;"></div>
<div style="position:absolute;left:38px;top:112px;width:65px;height:18px;background:#fdfdfd;"></div>
<div style="position:absolute;left:108px;top:112px;width:65px;height:18px;background:#fdfdfd;"></div>
<div style="position:absolute;left:178px;top:112px;width:65px;height:18px;background:#fdfdfd;"></div>
<div style="position:absolute;left:248px;top:112px;width:65px;height:18px;background:#fdfdfd;"></div>
<div style="position:absolute;left:318px;top:112px;width:65px;height:18px;background:#fdfdfd;"></div>
<div style="position:absolute;left:388px;top:112px;width:112px;height:18px;background:#fdfdfd;"></div>
<div style="position:absolute;left:0px;top:133px;width:33px;height:18px;background:#fdfdfd;"></div>
<div style="position:absolute;left:38px;top:133px;width:65px;height:18px;background:#fdfdfd;"></div>
<div style="position:absolute;left:108px;top:133px;width:65px;height:18px;background:#fdfdfd;"></div>
<div style="position:absolute;left:178px;top:133px;width:65px;height:18px;background:#fdfdfd;"></div>
<div style="position:absolute;left:248px;top:133px;width:65px;height:18px;background:#fdfdfd;"></div>
<div style="position:absolute;left:318px;top:133px;width:65px;height:18px;background:#fdfdfd;"></div>
<div style="position:absolute;left:388px;top:133px;width:112px;height:18px;background:#fdfdfd;"></div>
<div style="position:absolute;left:0px;top:154px;width:33px;height:18px;background:#fdfdfd;"></div>
<div style="position:absolute;left:38px;top:154px;width:65px;height:18px;background:#fdfdfd;"></div>
<div style="position:absolute;left:108px;top:154px;width:65px;height:18px;background:#fdfdfd;"></div>
<div style="position:absolute;left:178px;top:154px;width:65px;height:18px;background:#fdfdfd;"></div>
<div style="position:absolute;left:248px;top:154px;width:65px;height:18px;background:#fdfdfd;"></div>
<div style="position:absolute;left:318px;top:154px;width:65px;height:18px;background:#fdfdfd;"></div>
<div style="position:absolute;left:388px;top:154px;width:112px;height:18px;background:#fdfdfd;"></div>
<div style="position:absolute;left:0px;top:175px;width:33px;height:18px;background:#fdfdfd;"></div>
<div style="position:absolute;left:38px;top:175px;width:65px;height:18px;background:#fdfdfd;"></div>
<div style="position:absolute;left:108px;top:175px;width:65px;height:18px;background:#fdfdfd;"></div>
<div style="position:absolute;left:178px;top:175px;width:65px;height:18px;background:#fdfdfd;"></div>
<div style="position:absolute;left:248px;top:175px;width:65px;height:18px;background:#fdfdfd;"></div>
<div style="position:absolute;left:318px;top:175px;width:65px;height:18px;background:#fdfdfd;"></div>
<div style="position:absolute;left:388px;top:175px;width:112px;height:18px;background:#fdfdfd;"></div>
<div style="position:absolute;left:0px;top:196px;width:33px;height:18px;background:#fdfdfd;"></div>
<div style="position:absolute;left:38px;top:196px;width:65px;height:18px;background:#fdfdfd;"></div>
<div style="position:absolute;left:108px;top:196px;width:65px;height:18px;background:#fdfdfd;"></div>
<div style="position:absolute;left:178px;top:196px;width:65px;height:18px;background:#fdfdfd;"></div>
<div style="position:absolute;left:248px;top:196px;width:65px;height:18px;background:#fdfdfd;"></div>
<div style="position:absolute;left:318px;top:196px;width:65px;height:18px;background:#fdfdfd;"></div>
<div style="position:absolute;left:388px;top:196px;width:112px;height:18px;background:#fdfdfd;"></div>
<div style="position:absolute;left:0px;top:217px;width:33px;height:18px;background:#fdfdfd;"></div>
<div style="position:absolute;left:38px;top:217px;width:65px;height:18px;background:#fdfdfd;"></div>
<div style="position:absolute;left:108px;top:217px;width:65px;height:18px;background:#fdfdfd;"></div>
<div style="position:absolute;left:178px;top:217px;width:65px;height:18px;background:#fdfdfd;"></div>
<div style="position:absolute;left:248px;top:217px;width:65px;height:18px;background:#fdfdfd;"></div>
<div style="position:absolute;left:318px;top:217px;width:65px;height:18px;background:#fdfdfd;"></div>
<div style="position:absolute;left:388px;top:217px;width:112px;height:18px;background:#fdfdfd;"></div>
<div style="position:absolute;left:0px;top:238px;width:33px;height:18px;background:#fdfdfd;"></div>
<div style="position:absolute;left:38px;top:238px;width:65px;height:18px;background:#fdfdfd;"></div>
<div style="position:absolute;left:108px;top:238px;width:65px;height:18px;background:#fdfdfd;"></div>
<div style="position:absolute;left:178px;top:238px;width:65px;height:18px;background:#fdfdfd;"></div>
<div style="position:absolute;left:248px;top:238px;width:65px;height:18px;background:#fdfdfd;"></div>
<div style="position:absolute;left:318px;top:238px;width:65px;height:18px;background:#fdfdfd;"></div>
<div style="position:absolute;left:388px;top:238px;width:112px;height:18px;background:#fdfdfd;"></div>
<div style="position:absolute;left:0px;top:259px;width:33px;height:18px;background:#fdfdfd;"></div>
<div style="position:absolute;left:38px;top:259px;width:65px;height:18px;background:#fdfdfd;"></div>
<div style="position:absolute;left:108px;top:259px;width:65px;height:18px;background:#fdfdfd;"></div>
<div style="position:absolute;left:178px;top:259px;width:65px;height:18px;background:#fdfdfd;"></div>
<div style="position:absolute;left:248px;top:259px;width:65px;height:18px;background:#fdfdfd;"></div>
<div style="position:absolute;left:318px;top:259px;width:65px;height:18px;background:#fdfdfd;"></div>
<div style="position:absolute;left:388px;top:259px;width:112px;height:18px;background:#fdfdfd;"></div>
<div style="position:absolute;left:0px;top:280px;width:33px;height:18px;background:#fdfdfd;"></div>
<div style="position:absolute;left:38px;top:280px;width:65px;height:18px;background:#fdfdfd;"></div>
<div style="position:absolute;left:108px;top:280px;width:65px;height:18px;background:#fdfdfd;"></div>
<div style="position:absolute;left:178px;top:280px;width:65px;height:18px;background:#fdfdfd;"></div>
<div style="position:absolute;left:248px;top:280px;width:65px;height:18px;background:#fdfdfd;"></div>
<div style="position:absolute;left:318px;top:280px;width:65px;height:18px;background:#fdfdfd;"></div>
<div style="position:absolute;left:388px;top:280px;width:112px;height:18px;background:#fdfdfd;"></div>
<div style="position:absolute;left:0px;top:301px;width:33px;height:18px;background:#fdfdfd;"></div>
<div style="position:absolute;left:38px;top:301px;width:65px;height:18px;background:#fdfdfd;"></div>
<div style="position:absolute;left:108px;top:301px;width:65px;height:18px;background:#fdfdfd;"></div>
<div style="position:absolute;left:178px;top:301px;width:65px;height:18px;background:#fdfdfd;"></div>
<div style="position:absolute;left:248px;top:301px;width:65px;height:18px;background:#fdfdfd;"></div>
<div style="position:absolute;left:318px;top:301px;width:65px;height:18px;background:#fdfdfd;"></div>
<div style="position:absolute;left:388px;top:301px;width:112px;height:18px;background:#fdfdfd;"></div>
<div style="position:absolute;left:0px;top:322px;width:33px;height:18px;background:#fdfdfd;"></div>
<div style="position:absolute;left:38px;top:322px;width:65px;height:18px;background:#fdfdfd;"></div>
<div style="position:absolute;left:108px;top:322px;width:65px;height:18px;background:#fdfdfd;"></div>
<div style="position:absolute;left:178px;top:322px;width:65px;height:18px;background:#fdfdfd;"></div>
<div style="position:absolute;left:248px;top:322px;width:65px;height:18px;background:#fdfdfd;"></div>
<div style="position:absolute;left:318px;top:322px;width:65px;height:18px;background:#fdfdfd;"></div>
<div style="position:absolute;left:388px;top:322px;width:112px;height:18px;background:#fdfdfd;"></div>
<div style="position:absolute;left:0px;top:343px;width:33px;height:18px;background:#fdfdfd;"></div>
<div style="position:absolute;left:38px;top:343px;width:65px;height:18px;background:#fdfdfd;"></div>
<div style="position:absolute;left:108px;top:343px;width:65px;height:18px;background:#fdfdfd;"></div>
<div style="position:absolute;left:178px;top:343px;width:65px;height:18px;background:#fdfdfd;"></div>
<div style="position:absolute;left:248px;top:343px;width:65px;height:18px;background:#fdfdfd;"></div>
<div style="position:absolute;left:318px;top:343px;width:65px;height:18px;background:#fdfdfd;"></div>
<div style="position:absolute;left:388px;top:343px;width:112px;height:18px;background:#fdfdfd;"></div>
<div style="position:absolute;left:0px;top:364px;width:33px;height:18px;background:#fdfdfd;"></div>
<div style="position:absolute;left:38px;top:364px;width:65px;height:18px;background:#fdfdfd;"></div>
<div style="position:absolute;left:108px;top:364px;width:65px;height:18px;background:#fdfdfd;"></div>
<div style="position:absolute;left:178px;top:364px;width:65px;height:18px;background:#fdfdfd;"></div>
<div style="position:absolute;left:248px;top:364px;width:65px;height:18px;background:#fdfdfd;"></div>
<div style="position:absolute;left:318px;top:364px;width:65px;height:18px;background:#fdfdfd;"></div>
<div style="position:absolute;left:388px;top:364px;width:112px;height:18px;background:#fdfdfd;"></div>
<div style="position:absolute;left:0px;top:385px;width:33px;height:18px;background:#fdfdfd;"></div>
<div style="position:absolute;left:38px;top:385px;width:65px;height:18px;background:#fdfdfd;"></div>
<div style="position:absolute;left:108px;top:385px;width:65px;height:18px;background:#fdfdfd;"></div>
<div style="position:absolute;left:178px;top:385px;width:65px;height:18px;background:#fdfdfd;"></div>
<div style="position:absolute;left:248px;top:385px;width:65px;height:18px;background:#fdfdfd;"></div>
<div style="position:absolute;left:318px;top:385px;width:65px;height:18px;background:#fdfdfd;"></div>
<div style="position:absolute;left:388px;top:385px;width:112px;height:18px;background:#fdfdfd;"></div>
<div style="position:absolute;left:41px;top:12px;width:47px;height:8px;background:#a4a4a4;"></div>
<div style="position:absolute;left:113px;top:12px;width:47px;height:8px;background:#a4a4a4;"></div>
<div style="position:absolute;left:182px;top:12px;width:47px;height:8px;background:#a4a4a4;"></div>
<div style="position:absolute;left:251px;top:12px;width:47px;height:8px;background:#a4a4a4;"></div>
<div style="position:absolute;left:320px;top:12px;width:47px;height:8px;background:#a4a4a4;"></div>
<div style="position:absolute;left:389px;top:12px;width:49px;height:8px;background:#a4a4a4;"></div>
<div style="position:absolute;left:0px;top:55px;width:27px;height:7px;background:#d0d0d0;"></div>
<div style="position:absolute;left:0px;top:76px;width:27px;height:7px;background:#d0d0d0;"></div>
<div style="position:absolute;left:0px;top:97px;width:27px;height:7px;background:#d0d0d0;"></div>
<div style="position:absolute;left:0px;top:118px;width:27px;height:7px;background:#d0d0d0;"></div>
<div style="position:absolute;left:0px;top:139px;width:27px;height:7px;background:#d0d0d0;"></div>
<div style="position:absolute;left:0px;top:160px;width:27px;height:7px;background:#d0d0d0;"></div>
<div style="position:absolute;left:0px;top:181px;width:27px;height:7px;background:#d0d0d0;"></div>
<div style="position:absolute;left:0px;top:223px;width:27px;height:7px;background:#d0d0d0;"></div>
<div style="position:absolute;left:0px;top:244px;width:27px;height:7px;background:#d0d0d0;"></div>
<div style="position:absolute;left:0px;top:265px;width:27px;height:7px;background:#d0d0d0;"></div>
<div style="position:absolute;left:0px;top:286px;width:27px;height:7px;background:#d0d0d0;"></div>
<div style="position:absolute;left:0px;top:307px;width:27px;height:7px;background:#d0d0d0;"></div>
<div style="position:absolute;left:0px;top:328px;width:27px;height:7px;background:#d0d0d0;"></div>
<div style="position:absolute;left:0px;top:349px;width:27px;height:7px;background:#d0d0d0;"></div>
<div style="position:absolute;left:0px;top:370px;width:27px;height:7px;background:#d0d0d0;"></div>
<div style="position:absolute;left:0px;top:391px;width:27px;height:7px;background:#d0d0d0;"></div>
<div style="position:absolute;left:252px;top:34px;width:44px;height:7px;background:#d0d0d0;"></div>
<div style="position:absolute;left:389px;top:34px;width:46px;height:7px;background:#d0d0d0;"></div>
<div style="position:absolute;left:251px;top:223px;width:52px;height:7px;background:#d0d0d0;"></div>
<div style="position:absolute;left:251px;top:244px;width:52px;height:7px;background:#d0d0d0;"></div>
<div style="position:absolute;left:251px;top:265px;width:52px;height:7px;background:#d0d0d0;"></div>
<div style="position:absolute;left:251px;top:307px;width:52px;height:7px;background:#d0d0d0;"></div>
<div style="position:absolute;left:251px;top:328px;width:52px;height:7px;background:#d0d0d0;"></div>
<div style="position:absolute;left:251px;top:349px;width:52px;height:7px;background:#d0d0d0;"></div>
<div style="position:absolute;left:251px;top:370px;width:52px;height:7px;background:#d0d0d0;"></div>
<div style="position:absolute;left:251px;top:391px;width:52px;height:7px;background:#d0d0d0;"></div>
<div style="position:absolute;left:389px;top:55px;width:115px;height:7px;background:#cfcfcf;"></div>
<div style="position:absolute;left:389px;top:76px;width:115px;height:7px;background:#cfcfcf;"></div>
<div style="position:absolute;left:389px;top:97px;width:115px;height:7px;background:#cfcfcf;"></div>
<div style="position:absolute;left:389px;top:118px;width:115px;height:7px;background:#cfcfcf;"></div>
<div style="position:absolute;left:389px;top:139px;width:115px;height:7px;background:#cfcfcf;"></div>
<div style="position:absolute;left:389px;top:160px;width:115px;height:7px;background:#cfcfcf;"></div>
<div style="position:absolute;left:389px;top:181px;width:115px;height:7px;background:#cfcfcf;"></div>
<div style="position:absolute;left:389px;top:223px;width:115px;height:7px;background:#cfcfcf;"></div>
<div style="position:absolute;left:389px;top:244px;width:115px;height:7px;background:#cfcfcf;"></div>
<div style="position:absolute;left:389px;top:265px;width:115px;height:7px;background:#cfcfcf;"></div>
<div style="position:absolute;left:389px;top:286px;width:115px;height:7px;background:#cfcfcf;"></div>
<div style="position:absolute;left:389px;top:307px;width:115px;height:7px;background:#cfcfcf;"></div>
<div style="position:absolute;left:389px;top:328px;width:115px;height:7px;background:#cfcfcf;"></div>
<div style="position:absolute;left:389px;top:349px;width:115px;height:7px;background:#cfcfcf;"></div>
<div style="position:absolute;left:389px;top:370px;width:115px;height:7px;background:#cfcfcf;"></div>
</div><div style="position:absolute;left:490px;top:0;width:18px;height:411px;background:linear-gradient(to right, rgba(255,255,255,0), rgba(255,255,255,0.9));"></div><div style="position:absolute;left:0;top:395px;width:508px;height:16px;background:linear-gradient(to bottom, rgba(255,255,255,0), rgba(255,255,255,0.7));"></div></div>
<div style="position:absolute;left:305px;top:338px;width:320px;height:401px;background:#ffffff;border-left:1px solid #ababab;border-top:1px solid #ababab;"></div>
<div style="position:absolute;left:306px;top:559px;width:303px;height:20px;background:#9fd4b4;"></div>
<div style="position:absolute;left:311.00px;top:343.50px;font-size:11.7px;line-height:11.7px;color:#333333;font-weight:normal;white-space:pre;">874: Thai (Windows)</div>
<div style="position:absolute;left:311.00px;top:363.50px;font-size:11.7px;line-height:11.7px;color:#333333;font-weight:normal;white-space:pre;">857: Turkish (DOS)</div>
<div style="position:absolute;left:311.00px;top:383.50px;font-size:11.7px;line-height:11.7px;color:#333333;font-weight:normal;white-space:pre;">28599: Turkish (ISO)</div>
<div style="position:absolute;left:311.00px;top:403.50px;font-size:11.7px;line-height:11.7px;color:#333333;font-weight:normal;white-space:pre;">10081: Turkish (Mac)</div>
<div style="position:absolute;left:311.00px;top:423.50px;font-size:11.7px;line-height:11.7px;color:#333333;font-weight:normal;white-space:pre;">1254: Turkish (Windows)</div>
<div style="position:absolute;left:311.00px;top:443.50px;font-size:11.7px;line-height:11.7px;color:#333333;font-weight:normal;white-space:pre;">10017: Ukrainian (Mac)</div>
<div style="position:absolute;left:311.00px;top:463.50px;font-size:11.7px;line-height:11.7px;color:#333333;font-weight:normal;white-space:pre;">1200: Unicode</div>
<div style="position:absolute;left:311.00px;top:483.50px;font-size:11.7px;line-height:11.7px;color:#333333;font-weight:normal;white-space:pre;">1201: Unicode (Big-Endian)</div>
<div style="position:absolute;left:311.00px;top:503.50px;font-size:11.7px;line-height:11.7px;color:#333333;font-weight:normal;white-space:pre;">12001: Unicode (UTF-32 Big-Endian)</div>
<div style="position:absolute;left:311.00px;top:523.50px;font-size:11.7px;line-height:11.7px;color:#333333;font-weight:normal;white-space:pre;">12000: Unicode (UTF-32)</div>
<div style="position:absolute;left:311.00px;top:543.50px;font-size:11.7px;line-height:11.7px;color:#333333;font-weight:normal;white-space:pre;">65000: Unicode (UTF-7)</div>
<div style="position:absolute;left:311.00px;top:563.50px;font-size:11.7px;line-height:11.7px;color:#333333;font-weight:normal;white-space:pre;">65001: Unicode (UTF-8)</div>
<div style="position:absolute;left:311.00px;top:583.50px;font-size:11.7px;line-height:11.7px;color:#333333;font-weight:normal;white-space:pre;">20127: US-ASCII</div>
<div style="position:absolute;left:311.00px;top:603.50px;font-size:11.7px;line-height:11.7px;color:#333333;font-weight:normal;white-space:pre;">1258: Vietnamese (Windows)</div>
<div style="position:absolute;left:311.00px;top:623.50px;font-size:11.7px;line-height:11.7px;color:#333333;font-weight:normal;white-space:pre;">20005: Wang Taiwan</div>
<div style="position:absolute;left:311.00px;top:643.50px;font-size:11.7px;line-height:11.7px;color:#333333;font-weight:normal;white-space:pre;">850: Western European (DOS)</div>
<div style="position:absolute;left:311.00px;top:663.50px;font-size:11.7px;line-height:11.7px;color:#333333;font-weight:normal;white-space:pre;">20105: Western European (IA5)</div>
<div style="position:absolute;left:311.00px;top:683.50px;font-size:11.7px;line-height:11.7px;color:#333333;font-weight:normal;white-space:pre;">28591: Western European (ISO)</div>
<div style="position:absolute;left:311.00px;top:703.50px;font-size:11.7px;line-height:11.7px;color:#333333;font-weight:normal;white-space:pre;">10000: Western European (Mac)</div>
<div style="position:absolute;left:311.00px;top:723.50px;font-size:11.7px;line-height:11.7px;color:#333333;font-weight:normal;white-space:pre;">1252: Western European (Windows)</div>
<div style="position:absolute;left:609px;top:339px;width:16px;height:400px;background:#f0f0f0;"></div>
<div style="position:absolute;left:610px;top:660px;width:15px;height:45px;background:#c8c8c8;"></div>
<svg style="position:absolute;left:611px;top:354px;" width="13" height="12" viewBox="0 0 13 12"><path d="M1.3 10 L6.5 3.8 L11.7 10" fill="none" stroke="#555" stroke-width="3"/></svg>
<div style="position:absolute;left:626px;top:338px;width:1px;height:4px;background:#ababab;"></div>
<svg style="position:absolute;left:611px;top:711px;" width="13" height="12" viewBox="0 0 13 12"><path d="M1.3 2.2 L6.5 8.5 L11.7 2.2" fill="none" stroke="#555" stroke-width="3"/></svg>
<svg style="position:absolute;left:492px;top:567px;" width="14" height="21" viewBox="0 0 14 21"><path d="M1.5 1.5 V15.5 L4.8 12.5 L7.3 18.3 L9.6 17.3 L7.2 11.6 L11.8 11.6 Z" fill="#fff" stroke="#111" stroke-width="1" stroke-linejoin="miter"/></svg>
<div style="position:absolute;left:348px;top:34px;width:42px;height:24px;border:3px solid #41a046;z-index:20;"></div>
<div style="position:absolute;left:42px;top:63px;width:120px;height:28px;border:3px solid #41a046;z-index:20;"></div>
<div style="position:absolute;left:294px;top:291px;width:239px;height:51px;border:3px solid #41a046;z-index:20;"></div>
<div style="position:absolute;left:906px;top:842px;width:72px;height:23px;border:3px solid #41a046;z-index:20;"></div>
<div style="position:absolute;left:348.0px;top:61.900000000000006px;width:41px;height:41px;border-radius:50%;background:#41a046;box-shadow:1px 3px 5px rgba(0,0,0,0.42);z-index:30;"></div>
<svg style="position:absolute;left:350px;top:60px;z-index:31" width="40" height="40" viewBox="350 60 40 40"><polygon points="369.6,71.3 372.5,71.3 372.5,92.7 369.6,92.7" fill="#fff"/><polygon points="369.6,71.3 372.5,71.3 372.5,72.8 362.6,79.3 362.6,76.2" fill="#fff"/></svg>
<div style="position:absolute;left:153.9px;top:85.0px;width:41px;height:41px;border-radius:50%;background:#41a046;box-shadow:1px 3px 5px rgba(0,0,0,0.42);z-index:30;"></div>
<div style="position:absolute;left:165.78px;top:90.46px;font-size:31px;line-height:31px;color:#ffffff;font-weight:normal;white-space:pre;z-index:31;">2</div>
<div style="position:absolute;left:250.0px;top:295.5px;width:41px;height:41px;border-radius:50%;background:#41a046;box-shadow:1px 3px 5px rgba(0,0,0,0.42);z-index:30;"></div>
<div style="position:absolute;left:261.88px;top:300.96px;font-size:31px;line-height:31px;color:#ffffff;font-weight:normal;white-space:pre;z-index:31;">3</div>
<div style="position:absolute;left:856.4px;top:827.5px;width:41px;height:41px;border-radius:50%;background:#41a046;box-shadow:1px 3px 5px rgba(0,0,0,0.42);z-index:30;"></div>
<div style="position:absolute;left:868.27px;top:832.96px;font-size:31px;line-height:31px;color:#ffffff;font-weight:normal;white-space:pre;z-index:31;">4</div>
<svg style="position:absolute;left:20px;top:6px;" width="16" height="16" viewBox="0 0 16 16"><path d="M1.5 1.5 H12 L14.5 4 V14.5 H1.5 Z" fill="none" stroke="#fff" stroke-width="1.6"/><rect x="4" y="2" width="7" height="4" fill="#fff"/><rect x="4" y="9" width="8" height="5.5" fill="none" stroke="#fff" stroke-width="1.4"/><rect x="6" y="11" width="2" height="3" fill="#fff"/></svg>
<svg style="position:absolute;left:49px;top:7px;" width="16" height="14" viewBox="0 0 16 14"><path d="M4 2 L1.5 5 L4.5 8 M1.8 5 H9 A4.2 4.2 0 0 1 9 13.4 H5" fill="none" stroke="#5f9b7b" stroke-width="1.6"/></svg>
<svg style="position:absolute;left:70px;top:11px;" width="6" height="4" viewBox="0 0 6 4"><polygon points="0,0 6,0 3,3" fill="#5f9b7b"/></svg>
<svg style="position:absolute;left:84px;top:7px;" width="16" height="14" viewBox="0 0 16 14"><path d="M12 2 L14.5 5 L11.5 8 M14.2 5 H7 A4.2 4.2 0 0 0 7 13.4 H11" fill="none" stroke="#5f9b7b" stroke-width="1.6"/></svg>
<svg style="position:absolute;left:105px;top:11px;" width="6" height="4" viewBox="0 0 6 4"><polygon points="0,0 6,0 3,3" fill="#5f9b7b"/></svg>
<svg style="position:absolute;left:123px;top:11px;" width="7" height="7" viewBox="0 0 7 7"><rect x="0" y="0" width="7" height="1.4" fill="#fff"/><polygon points="0,3 7,3 3.5,6.5" fill="#fff"/></svg>
<svg style="position:absolute;left:1269px;top:7px;" width="14" height="11" viewBox="0 0 14 11"><rect x="0.5" y="0.5" width="13" height="10" fill="none" stroke="#8cb9a0"/><path d="M0.5 3 H13.5 M7 9.5 V5 M5 6.8 L7 4.8 L9 6.8" fill="none" stroke="#8cb9a0"/></svg>
<div style="position:absolute;left:1317px;top:12px;width:10px;height:1px;background:#8cb9a0;"></div>
<div style="position:absolute;left:1363px;top:7px;width:10px;height:10px;background:transparent;border:1px solid #8cb9a0;"></div>
<svg style="position:absolute;left:1409px;top:7px;" width="10" height="10" viewBox="0 0 10 10"><path d="M0.5 0.5 L9.5 9.5 M9.5 0.5 L0.5 9.5" stroke="#8cb9a0" stroke-width="1.1"/></svg>
<svg style="position:absolute;left:1364px;top:37px;" width="18" height="18" viewBox="0 0 18 18"><circle cx="8" cy="6" r="4.3" fill="none" stroke="#fff" stroke-width="1.2"/><path d="M1 16.5 A7.5 7.5 0 0 1 9.5 10.5" fill="none" stroke="#fff" stroke-width="1.2"/><path d="M10 13.5 H16.5 M13.25 10.2 V16.8" stroke="#fff" stroke-width="1.3"/></svg>
<svg style="position:absolute;left:643px;top:37px;" width="13" height="17" viewBox="0 0 13 17"><path d="M6.5 1 A5.2 5.2 0 0 1 9.2 10.6 V12.5 H3.8 V10.6 A5.2 5.2 0 0 1 6.5 1 Z" fill="none" stroke="#fff" stroke-width="1.2"/><path d="M4.2 14.3 H8.8 M5 16 H8" stroke="#fff" stroke-width="1.1"/></svg>
<svg style="position:absolute;left:4px;top:64px;" width="40" height="40" viewBox="0 0 40 40"><polygon points="8.2,3.2 14.8,3.2 10.5,10.5 13.8,10.8 4.2,21.8 7.8,12.7 4.1,12.5" fill="#e9b55c"/><path d="M12 9.2 V29 A8 2.4 0 0 0 28 29 V9.2 Z" fill="#7f7f7f"/><ellipse cx="20" cy="9.2" rx="8" ry="2.4" fill="#7f7f7f" stroke="#f3f3f3" stroke-width="0.9"/><rect x="16" y="19" width="21" height="16.5" fill="#f3f3f3"/><rect x="17.5" y="20.5" width="18" height="14" fill="#fff" stroke="#7f7f7f" stroke-width="1"/><rect x="17" y="20" width="19" height="3" fill="#4a7ebb"/><path d="M23.5 23 V34.5 M29.5 23 V34.5 M17.5 27 H35.5 M17.5 31 H35.5" stroke="#9a9a9a" stroke-width="1"/></svg>
<svg style="position:absolute;left:35px;top:123px;" width="6" height="4" viewBox="0 0 6 4"><polygon points="0,0 6,0 3,3" fill="#6d6d6d"/></svg>
<svg style="position:absolute;left:49px;top:67px;" width="16" height="17" viewBox="0 0 16 17"><path d="M1.5 1.5 H8.5 L11.5 4.5 V6.5 M8.5 1.5 V4.5 H11.5 M1.5 1.5 V14.5 H7.5" fill="none" stroke="#6d6d6d" stroke-width="1"/><rect x="8.5" y="7.5" width="6" height="8" fill="#fff" stroke="#6d6d6d" stroke-width="1"/><path d="M10 10 H13 M10 12 H13 M10 14 H13" stroke="#8a8a8a" stroke-width="0.9"/></svg>
<svg style="position:absolute;left:49px;top:90px;" width="17" height="17" viewBox="0 0 17 17"><path d="M1.5 1.5 H8.5 L11.5 4.5 V6.5 M8.5 1.5 V4.5 H11.5 M1.5 1.5 V14.5 H5.5" fill="none" stroke="#6d6d6d" stroke-width="1"/><circle cx="10.4" cy="11.3" r="4.6" fill="#5b8fd0"/><path d="M7.5 10.3 H13.3 M7.5 12.3 H13.3" stroke="#fff" stroke-width="0.9"/><path d="M9.2 8.3 L10.4 7.4 L11.6 8.3 M9.2 14.3 L10.4 15.2 L11.6 14.3" fill="none" stroke="#fff" stroke-width="0.9"/></svg>
<svg style="position:absolute;left:47px;top:112px;" width="18" height="18" viewBox="0 0 18 18"><rect x="1.5" y="1.5" width="15" height="15" fill="#fff" stroke="#7f7f7f"/><rect x="1" y="1" width="16" height="3.5" fill="#4a7ebb"/><path d="M3 2.8 H5 M8 2.8 H10 M13 2.8 H15" stroke="#fff" stroke-width="0.9"/><path d="M6.5 4.5 V16.5 M11.5 4.5 V16.5 M1.5 7.5 H16.5 M1.5 10.5 H16.5 M1.5 13.5 H16.5" stroke="#9a9a9a" stroke-width="1"/></svg>
<svg style="position:absolute;left:172px;top:66px;" width="20" height="18" viewBox="0 0 20 18"><path d="M1.5 1.5 H8.5 L11.5 4.5 V6.5 M8.5 1.5 V4.5 H11.5 M1.5 1.5 V14.5 H6.5" fill="none" stroke="#6d6d6d" stroke-width="1"/><circle cx="12.6" cy="12.2" r="4.3" fill="#fff" stroke="#4a86c8" stroke-width="1.1"/><path d="M12.4 9.6 V12.6 H14.8" fill="none" stroke="#555" stroke-width="0.9"/></svg>
<svg style="position:absolute;left:326px;top:68px;" width="28" height="32" viewBox="0 0 28 32"><path d="M2.5 24.5 V1.5 H16.5" fill="none" stroke="#777" stroke-width="1"/><path d="M5.5 26.5 V3.5 H18.5" fill="none" stroke="#777" stroke-width="1"/><path d="M8.5 28.5 V5.5 H19.5 L23.5 9.5 V16 L16 28.5 Z" fill="#fff"/><path d="M15.7 28.5 H8.5 V5.5 H19.5 L23.5 9.5 V11 M19.5 5.5 V10.5 H23.5" fill="none" stroke="#777" stroke-width="1"/><path d="M18 22.5 A5 5 0 0 1 27.5 21" fill="none" stroke="#5f9f8a" stroke-width="2.4"/><path d="M27.6 24.5 A5 5 0 0 1 19.5 27.5" fill="none" stroke="#5f9f8a" stroke-width="2.4"/><polygon points="15.5,24 21,25.5 17,30.5" fill="#5f9f8a"/></svg>
<svg style="position:absolute;left:347px;top:124px;" width="6" height="4" viewBox="0 0 6 4"><polygon points="0,0 6,0 3,3" fill="#6d6d6d"/></svg>
<svg style="position:absolute;left:368px;top:113px;" width="13" height="16" viewBox="0 0 13 16"><path d="M1.5 1.5 H7.5 L10.5 4.5 V10 M7.5 1.5 V4.5 H10.5 M1.5 1.5 V13" fill="none" stroke="#b0b0b0" stroke-width="1"/><ellipse cx="5" cy="13" rx="3" ry="1.8" fill="none" stroke="#b0b0b0"/><ellipse cx="9" cy="13" rx="3" ry="1.8" fill="none" stroke="#b0b0b0"/></svg>
<svg style="position:absolute;left:366px;top:92px;" width="16" height="14" viewBox="0 0 16 14"><rect x="1.5" y="1.5" width="13" height="11" fill="none" stroke="#b0b0b0"/></svg>
<svg style="position:absolute;left:527px;top:73px;" width="17" height="19" viewBox="0 0 17 19"><text x="0" y="8" font-family="Liberation Sans" font-size="9" font-weight="bold" fill="#4a86c8">A</text><text x="0" y="17" font-family="Liberation Sans" font-size="9" font-weight="bold" fill="#8e44ad">Z</text><path d="M12.5 3 V16 M9.5 13 L12.5 16.5 L15.5 13" fill="none" stroke="#555" stroke-width="1.1"/></svg>
<svg style="position:absolute;left:527px;top:104px;" width="17" height="19" viewBox="0 0 17 19"><text x="0" y="8" font-family="Liberation Sans" font-size="9" font-weight="bold" fill="#8e44ad">Z</text><text x="0" y="17" font-family="Liberation Sans" font-size="9" font-weight="bold" fill="#4a86c8">A</text><path d="M12.5 3 V16 M9.5 13 L12.5 16.5 L15.5 13" fill="none" stroke="#555" stroke-width="1.1"/></svg>
<svg style="position:absolute;left:551px;top:69px;" width="31" height="27" viewBox="0 0 31 27"><rect x="1.5" y="1.5" width="28" height="24" fill="#fff" stroke="#7f7f7f"/><rect x="1" y="1" width="29" height="3" fill="#4a7ebb"/><path d="M15.5 4 V25.5" stroke="#7f7f7f"/><text x="3.5" y="14" font-family="Liberation Sans" font-size="10" font-weight="bold" fill="#8e44ad">Z</text><text x="3.5" y="24" font-family="Liberation Sans" font-size="10" font-weight="bold" fill="#4a86c8">A</text><text x="18" y="14" font-family="Liberation Sans" font-size="10" font-weight="bold" fill="#4a86c8">A</text><text x="18" y="24" font-family="Liberation Sans" font-size="10" font-weight="bold" fill="#8e44ad">Z</text></svg>
<svg style="position:absolute;left:603px;top:68px;" width="29" height="29" viewBox="0 0 29 29"><path d="M0.5 0.5 H28.5 L17 13 V28 H12 V13 Z" fill="#7a7a7a"/><path d="M4 2.5 H25 L15.5 12.5 V26.5 H13.5 V12.5 Z" fill="#8e8e8e"/></svg>
<svg style="position:absolute;left:642px;top:67px;" width="17" height="17" viewBox="0 0 17 17"><path d="M0.5 0.5 H12.5 L8 6 V11 H5 V6 Z" fill="#b5b5b5"/><path d="M8 9 L15 15.5 M15 9 L8 15.5" stroke="#b5b5b5" stroke-width="1.6"/></svg>
<svg style="position:absolute;left:642px;top:90px;" width="17" height="17" viewBox="0 0 17 17"><path d="M0.5 0.5 H12.5 L8 6 V11 H5 V6 Z" fill="#b5b5b5"/><path d="M8.5 12 A3.5 3.5 0 0 1 15 10.5 M15.5 13.5 A3.5 3.5 0 0 1 9 15" fill="none" stroke="#b5b5b5" stroke-width="1.4"/></svg>
<svg style="position:absolute;left:642px;top:113px;" width="17" height="17" viewBox="0 0 17 17"><path d="M0.5 0.5 H12.5 L8 6 V11 H5 V6 Z" fill="#5a5a5a"/><path d="M8 15.5 L14.5 9 L16 10.5 L9.5 17 L7.5 17 Z" fill="#4a86c8"/></svg>
<svg style="position:absolute;left:740px;top:68px;" width="33" height="27" viewBox="0 0 33 27"><rect x="1.5" y="10.5" width="14" height="15" fill="#fff" stroke="#7a7a7a"/><path d="M4 13.6 H13 M4 16.5 H13 M4 19.5 H13 M4 22.4 H13" stroke="#4a86c8" stroke-width="1"/><rect x="18.5" y="13.5" width="12" height="10" fill="#fff" stroke="#7a7a7a"/><rect x="18" y="13" width="13" height="2" fill="#666"/><path d="M20.5 17.5 H23 M26 17.5 H28.5 M20.5 21 H23 M26 21 H28.5" stroke="#4a86c8" stroke-width="1"/><path d="M24.5 15 V23.5" stroke="#7a7a7a"/><path d="M10.5 6.5 A8 7 0 0 1 23 7" fill="none" stroke="#4a86c8" stroke-width="2"/><polygon points="18.5,6.5 27,6.5 22.5,11.5" fill="#4a86c8"/></svg>
<svg style="position:absolute;left:785px;top:67px;" width="18" height="17" viewBox="0 0 18 17"><rect x="1.5" y="1.5" width="14" height="12" fill="#fff" stroke="#7a7a7a"/><path d="M1.5 5.5 H15.5 M1.5 9.5 H15.5 M5.5 1.5 V13.5" stroke="#b0b0b0"/><rect x="5.5" y="4" width="7" height="3" fill="none" stroke="#3f9a7a" stroke-width="1"/><polygon points="13,7 17.5,7 15,11 17,11 11.5,16.5 13,12 11,12" fill="#e9b55c"/></svg>
<svg style="position:absolute;left:785px;top:90px;" width="18" height="16" viewBox="0 0 18 16"><rect x="1" y="1" width="5" height="14" fill="#7a7a7a"/><rect x="2" y="2" width="3" height="3" fill="#4a7fc1"/><rect x="2" y="5.5" width="3" height="3" fill="#e9b55c"/><rect x="2" y="9" width="3" height="2.5" fill="#4a7fc1"/><rect x="2" y="12" width="3" height="2.5" fill="#e9b55c"/><rect x="12" y="1" width="5" height="14" fill="#7a7a7a"/><rect x="13" y="2" width="3" height="3" fill="#4a7fc1"/><rect x="13" y="5.5" width="3" height="3" fill="#e9b55c"/><rect x="13" y="9" width="3" height="2.5" fill="#fff"/><rect x="13" y="12" width="3" height="2.5" fill="#fff"/><path d="M7 7.5 H10.5" stroke="#4a86c8" stroke-width="1.2"/><polygon points="9.5,5.5 11.5,7.5 9.5,9.5" fill="#4a86c8"/></svg>
<svg style="position:absolute;left:785px;top:112px;" width="18" height="17" viewBox="0 0 18 17"><rect x="1.5" y="4.5" width="9" height="3.5" fill="#fff" stroke="#7a7a7a"/><rect x="1.5" y="11.5" width="9" height="3.5" fill="#fff" stroke="#7a7a7a"/><path d="M10 4 L12 6.5 L16.5 1" fill="none" stroke="#3f9a7a" stroke-width="1.4"/><circle cx="12.5" cy="13.5" r="3.2" fill="#fff" stroke="#d9534f" stroke-width="1.3"/><path d="M10.5 11.5 L14.5 15.5" stroke="#d9534f" stroke-width="1.2"/></svg>
<svg style="position:absolute;left:893px;top:121px;" width="6" height="4" viewBox="0 0 6 4"><polygon points="0,0 6,0 3,3" fill="#6d6d6d"/></svg>
<svg style="position:absolute;left:915px;top:67px;" width="18" height="16" viewBox="0 0 18 16"><rect x="1.5" y="1.5" width="3.5" height="13" fill="#fff" stroke="#7a7a7a"/><path d="M1.5 5 H5 M1.5 8 H5 M1.5 11 H5" stroke="#7a7a7a"/><path d="M6.5 8 H10" stroke="#4a86c8" stroke-width="1.1"/><polygon points="9,6.3 11,8 9,9.7" fill="#4a86c8"/><rect x="12.5" y="5.5" width="4" height="4" fill="#fff" stroke="#d9534f" stroke-width="1.1"/></svg>
<svg style="position:absolute;left:915px;top:89px;" width="18" height="18" viewBox="0 0 18 18"><rect x="1.5" y="6.5" width="5" height="4" fill="none" stroke="#b8b8b8"/><rect x="10.5" y="1.5" width="5" height="4" fill="none" stroke="#b8b8b8"/><rect x="10.5" y="11.5" width="5" height="4" fill="none" stroke="#b8b8b8"/><path d="M6.5 8.5 H8.5 V3.5 H10.5 M8.5 8.5 V13.5 H10.5" fill="none" stroke="#b8b8b8"/></svg>
<svg style="position:absolute;left:915px;top:112px;" width="18" height="17" viewBox="0 0 18 17"><path d="M1 3 A8 2.5 0 0 1 17 3 V14 A8 2.5 0 0 1 1 14 Z" fill="#5cb85c"/><path d="M3 6 H15 M3 10 H15 M7 4 V15 M11 4 V15" stroke="#fff" stroke-width="0.8"/></svg>
<svg style="position:absolute;left:1071px;top:68px;" width="33" height="32" viewBox="0 0 33 32"><rect x="2.2" y="2.2" width="25.5" height="25.5" fill="#fff"/><path d="M7.5 2.2 V27.7 M12.5 2.2 V27.7 M17.4 2.2 V27.7 M22.6 2.2 V27.7 M2.2 7.3 H27.7 M2.2 12.5 H27.7 M2.2 17.4 H27.7 M2.2 22.4 H27.7" stroke="#9a9a9a" stroke-width="1" stroke-dasharray="2.2 2.8" stroke-dashoffset="-1.5"/><path d="M2.2 27.7 V2.2 H27.7 V9.6 M2.2 27.7 H20.9" fill="none" stroke="#6f6f6f" stroke-width="1.1"/><rect x="7.7" y="7.7" width="4.6" height="4.6" fill="#fff" stroke="#e8873a" stroke-width="1.2"/><rect x="7.7" y="17.8" width="4.6" height="4.6" fill="#fff" stroke="#e8873a" stroke-width="1.2"/><path d="M18.3 17.4 A5.6 5.4 0 1 1 26.2 21.4 Q23.6 22.6 23.6 25.5" fill="none" stroke="#fff" stroke-width="5"/><path d="M18.3 17.4 A5.6 5.4 0 1 1 26.2 21.4 Q23.6 22.6 23.6 25.5" fill="none" stroke="#3f7fc0" stroke-width="3"/><rect x="21.9" y="27.6" width="3.4" height="3" fill="#3f7fc0"/></svg>
<svg style="position:absolute;left:1105px;top:127px;" width="6" height="4" viewBox="0 0 6 4"><polygon points="0,0 6,0 3,3" fill="#6d6d6d"/></svg>
<svg style="position:absolute;left:1123px;top:69px;" width="30" height="27" viewBox="0 0 30 27"><rect x="1.5" y="1.5" width="27" height="21" fill="#fff" stroke="#8a8a8a"/><path d="M1.5 7.5 H28.5 M1.5 13.5 H28.5 M8.5 1.5 V22.5 M15.5 1.5 V22.5 M22.5 1.5 V22.5" stroke="#c0c0c0"/><path d="M3 20 L9 14 L13 17 L19 10" fill="none" stroke="#4a86c8" stroke-width="2"/><path d="M19 10 L25 4" fill="none" stroke="#e05a3a" stroke-width="2"/><polygon points="21,3 27,2 26,8" fill="#e05a3a"/><path d="M5 22.5 L7 25.5 H12 L14 22.5" fill="none" stroke="#8a8a8a"/></svg>
<svg style="position:absolute;left:1175px;top:69px;" width="34" height="28" viewBox="0 0 34 28"><path d="M2 3.9 H9.5" stroke="#5a9e85" stroke-width="2"/><polygon points="6.2,0.2 8.8,0.2 12.8,3.9 8.8,7.6 6.2,7.6 9.9,3.9" fill="#5a9e85"/><path d="M20.7 1.4 H15.6 V7.4 M15.6 19.3 V26.5 H20.7" fill="none" stroke="#777" stroke-width="1.1"/><rect x="11.7" y="9.7" width="8" height="8" fill="#fff" stroke="#777" stroke-width="1.1"/><path d="M13.4 13.7 H18 M15.7 11.4 V16" stroke="#666" stroke-width="1"/><rect x="22.9" y="1.4" width="9" height="25.1" fill="#fff" stroke="#777" stroke-width="1.1"/><path d="M22.9 6.42 H31.9" stroke="#777" stroke-width="1.1"/><path d="M22.9 11.44 H31.9" stroke="#777" stroke-width="1.1"/><path d="M22.9 16.46 H31.9" stroke="#777" stroke-width="1.1"/><path d="M22.9 21.48 H31.9" stroke="#777" stroke-width="1.1"/><path d="M25.40 3.91 H29.40" stroke="#3f7fc0" stroke-width="1.2"/><path d="M25.40 8.93 H29.40" stroke="#3f7fc0" stroke-width="1.2"/><path d="M25.40 13.95 H29.40" stroke="#3f7fc0" stroke-width="1.2"/><path d="M25.40 18.97 H29.40" stroke="#3f7fc0" stroke-width="1.2"/><path d="M25.40 23.99 H29.40" stroke="#3f7fc0" stroke-width="1.2"/></svg>
<svg style="position:absolute;left:1189px;top:124px;" width="6" height="4" viewBox="0 0 6 4"><polygon points="0,0 6,0 3,3" fill="#6d6d6d"/></svg>
<svg style="position:absolute;left:1224px;top:69px;" width="34" height="28" viewBox="0 0 34 28"><path d="M4 3.8 H11.5" stroke="#5a9e85" stroke-width="2"/><polygon points="6.6,0.2 4,0.2 0.2,3.8 4,7.4 6.6,7.4 2.9,3.8" fill="#5a9e85"/><path d="M19 1.3 H14 V7.3 M14 19.2 V26.4 H19" fill="none" stroke="#777" stroke-width="1.1"/><rect x="9.6" y="9.6" width="8" height="7.9" fill="#fff" stroke="#e0502a" stroke-width="1.3"/><path d="M10 17 L17.2 10" stroke="#e0502a" stroke-width="1.3"/><rect x="20.8" y="1.3" width="9.5" height="25.1" fill="#fff" stroke="#777" stroke-width="1.1"/><path d="M20.8 6.32 H30.3" stroke="#777" stroke-width="1.1"/><path d="M20.8 11.34 H30.3" stroke="#777" stroke-width="1.1"/><path d="M20.8 16.36 H30.3" stroke="#777" stroke-width="1.1"/><path d="M20.8 21.38 H30.3" stroke="#777" stroke-width="1.1"/><path d="M23.55 3.81 H27.55" stroke="#3f7fc0" stroke-width="1.2"/><path d="M23.55 8.83 H27.55" stroke="#3f7fc0" stroke-width="1.2"/><path d="M23.55 13.85 H27.55" stroke="#3f7fc0" stroke-width="1.2"/><path d="M23.55 18.87 H27.55" stroke="#3f7fc0" stroke-width="1.2"/><path d="M23.55 23.89 H27.55" stroke="#3f7fc0" stroke-width="1.2"/></svg>
<svg style="position:absolute;left:1236px;top:124px;" width="6" height="4" viewBox="0 0 6 4"><polygon points="0,0 6,0 3,3" fill="#6d6d6d"/></svg>
<svg style="position:absolute;left:1272px;top:69px;" width="34" height="28" viewBox="0 0 34 28"><path d="M11 1.3 H6.9 V6.6" fill="none" stroke="#777" stroke-width="1.1"/><rect x="2.8" y="8.2" width="8.3" height="8.3" fill="#fff" stroke="#777" stroke-width="1.1"/><path d="M4.6 12.35 H9.3 M6.95 10 V14.7" stroke="#666"/><rect x="2.8" y="18.4" width="8.3" height="8.3" fill="#fff" stroke="#777" stroke-width="1.1"/><path d="M4.6 22.55 H9.3 M6.95 20.2 V24.9" stroke="#666"/><rect x="12.9" y="1.3" width="18.5" height="25.1" fill="#fff" stroke="#777" stroke-width="1.1"/><path d="M22.2 1.3 V26.4" stroke="#777" stroke-width="1.1"/><path d="M12.9 6.32 H31.4" stroke="#777" stroke-width="1.1"/><path d="M12.9 11.34 H31.4" stroke="#777" stroke-width="1.1"/><path d="M12.9 16.36 H31.4" stroke="#777" stroke-width="1.1"/><path d="M12.9 21.38 H31.4" stroke="#777" stroke-width="1.1"/><path d="M15.6 3.81 H19.6" stroke="#3f7fc0" stroke-width="1.2"/><path d="M15.6 8.83 H19.6" stroke="#3f7fc0" stroke-width="1.2"/><path d="M15.6 13.85 H19.6" stroke="#e8873a" stroke-width="1.2"/><path d="M24.8 13.85 H28.8" stroke="#e8873a" stroke-width="1.2"/><path d="M15.6 18.87 H19.6" stroke="#3f7fc0" stroke-width="1.2"/><path d="M15.6 23.89 H19.6" stroke="#e8873a" stroke-width="1.2"/><path d="M24.8 23.89 H28.8" stroke="#e8873a" stroke-width="1.2"/></svg>
<svg style="position:absolute;left:1318px;top:67px;" width="16" height="15" viewBox="0 0 16 15"><path d="M1 5 H6.5 M3.75 2.2 V7.8" stroke="#c0c0c0" stroke-width="1.8"/><path d="M8 2 H15 M10 6 H15 M10 10 H15 M10 14 H15 M8.5 2 V14" stroke="#c8c8c8"/></svg>
<svg style="position:absolute;left:1318px;top:90px;" width="16" height="15" viewBox="0 0 16 15"><path d="M1 4.5 H6.5" stroke="#c0c0c0" stroke-width="1.8"/><path d="M8 2 H15 M10 6 H15 M10 10 H15 M10 14 H15 M8.5 2 V14" stroke="#c8c8c8"/></svg>
<svg style="position:absolute;left:1329px;top:142px;" width="8" height="8" viewBox="0 0 8 8"><path d="M0.5 0.5 H5 M0.5 0.5 V5 M2.5 2.5 L7 7 M7 3.5 V7 H3.5" fill="none" stroke="#777"/></svg>
<svg style="position:absolute;left:1416px;top:141px;" width="12" height="8" viewBox="0 0 12 8"><path d="M1.5 6.5 L6 2 L10.5 6.5" fill="none" stroke="#555" stroke-width="1.3"/></svg>
<svg style="position:absolute;left:91px;top:174px;" width="9" height="5" viewBox="0 0 9 5"><polygon points="0,0 9,0 4.5,4.5" fill="#777"/></svg>
<svg style="position:absolute;left:120px;top:171px;" width="3" height="11" viewBox="0 0 3 11"><rect x="0.5" y="0" width="2" height="2" fill="#a6a6a6"/><rect x="0.5" y="4.5" width="2" height="2" fill="#a6a6a6"/><rect x="0.5" y="9" width="2" height="2" fill="#a6a6a6"/></svg>
<svg style="position:absolute;left:148px;top:171px;" width="13" height="12" viewBox="0 0 13 12"><path d="M1.5 1 L11.5 11 M11.5 1 L1.5 11" stroke="#c4c4c4" stroke-width="1.9"/></svg>
<svg style="position:absolute;left:184px;top:171px;" width="15" height="13" viewBox="0 0 15 13"><path d="M1.2 6 L5.2 11 L14 1.5" fill="none" stroke="#c8c8c8" stroke-width="2.6"/></svg>
<div style="position:absolute;left:222px;top:167px;font-family:'Liberation Serif',serif;font-style:italic;font-size:14px;line-height:18px;color:#555;font-weight:bold;letter-spacing:-1px;">f<span style="font-size:11px">x</span></div>
<svg style="position:absolute;left:1420px;top:173px;" width="8" height="6" viewBox="0 0 8 6"><path d="M1 1 L4 4.5 L7 1" fill="none" stroke="#555" stroke-width="1.5"/></svg>
<svg style="position:absolute;left:1422px;top:206px;" width="9" height="6" viewBox="0 0 9 6"><polygon points="0,5 8,5 4,1" fill="#777"/></svg>
<svg style="position:absolute;left:1423px;top:695px;" width="10" height="6" viewBox="0 0 10 6"><polygon points="0,0 9,0 4.5,5" fill="#777"/></svg>
<svg style="position:absolute;left:1407px;top:714px;" width="6" height="10" viewBox="0 0 6 10"><polygon points="0,0 5,5 0,10" fill="#777"/></svg>
<svg style="position:absolute;left:25px;top:713px;" width="6" height="10" viewBox="0 0 6 10"><polygon points="5,0 0,5 5,10" fill="#c6c6c6"/></svg>
<svg style="position:absolute;left:54px;top:713px;" width="6" height="10" viewBox="0 0 6 10"><polygon points="0,0 5,5 0,10" fill="#c6c6c6"/></svg>
<svg style="position:absolute;left:196px;top:710px;" width="17" height="17" viewBox="0 0 17 17"><circle cx="8.5" cy="8.5" r="7.5" fill="none" stroke="#666" stroke-width="1.1"/><path d="M4.5 8.5 H12.5 M8.5 4.5 V12.5" stroke="#666" stroke-width="1.6"/></svg>
<svg style="position:absolute;left:1154px;top:735px;" width="15" height="15" viewBox="0 0 15 15"><path d="M1.5 1.5 H13.5 V13.5 H1.5 Z M1.5 5.5 H13.5 M1.5 9.5 H13.5 M5.5 1.5 V13.5 M9.5 1.5 V13.5" fill="none" stroke="#777"/></svg>
<svg style="position:absolute;left:1186px;top:735px;" width="15" height="15" viewBox="0 0 15 15"><rect x="1.5" y="1.5" width="12" height="12" fill="none" stroke="#666"/><rect x="3.5" y="3.5" width="8" height="8" fill="none" stroke="#666"/><path d="M5 5.5 H10 M5 7.5 H10 M5 9.5 H10" stroke="#666"/></svg>
<svg style="position:absolute;left:1224px;top:735px;" width="15" height="15" viewBox="0 0 15 15"><path d="M1.5 1.5 V13.5 H13.5 V1.5 M5.5 1.5 V7.5 H9.5 V1.5 M1.5 1.5 H13.5" fill="none" stroke="#666"/></svg>
<div style="position:absolute;left:1256px;top:742px;width:7px;height:2px;background:#666;"></div>
<div style="position:absolute;left:1266px;top:742px;width:100px;height:1px;background:#9b9b9b;"></div>
<div style="position:absolute;left:1314px;top:736px;width:5px;height:12px;background:#777;"></div>
<svg style="position:absolute;left:1368px;top:738px;" width="10" height="10" viewBox="0 0 10 10"><path d="M0.5 5 H8.5 M4.5 1 V9" stroke="#555" stroke-width="1.6"/></svg>
</body></html>
